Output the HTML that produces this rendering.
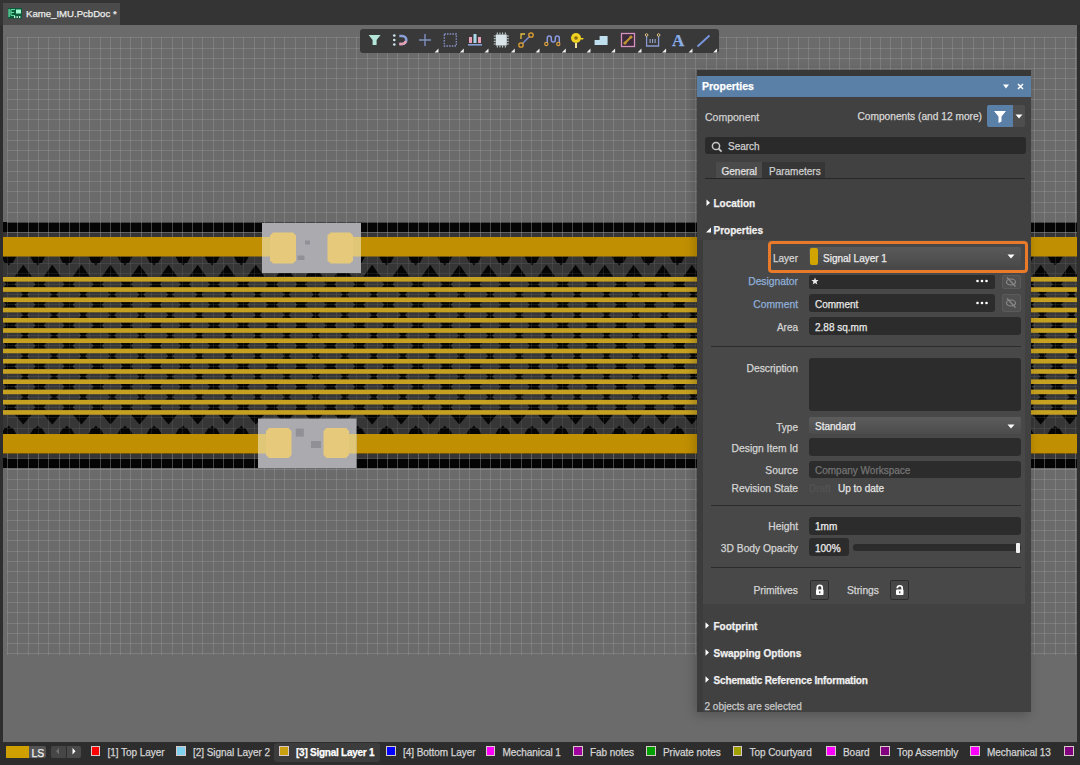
<!DOCTYPE html><html><head><meta charset="utf-8"><style>
*{margin:0;padding:0;box-sizing:border-box}
html,body{width:1080px;height:765px;overflow:hidden;background:#2e2e2e;font-family:"Liberation Sans",sans-serif}
.a{position:absolute}
.t{position:absolute;white-space:nowrap;line-height:1;-webkit-text-stroke:0.25px currentColor}
</style></head><body>
<div class="a" style="left:0;top:0;width:1080px;height:25px;background:#353434"></div>
<div class="a" style="left:3px;top:3px;width:117px;height:22px;background:#4b4b4b"></div>
<span class="t" style="left:26px;top:8.9px;font-size:9.6px;color:#ececec;font-weight:400;">Kame_IMU.PcbDoc *</span>
<svg class="a" style="left:7.5px;top:8px" width="15" height="11"><rect x="0" y="0" width="14" height="10.5" fill="#0b5a3a"/><rect x="0.5" y="1" width="1.2" height="8" fill="#70e8b0"/><path d="M3 1.5h4M3 4.5h3M3 7.5h4M3 1.5v6" stroke="#60d8a0" stroke-width="1.2"/><rect x="8" y="1.5" width="5" height="4" fill="#a0f8d0"/><rect x="6" y="8" width="1.3" height="2" fill="#c0f0d8"/><rect x="8.5" y="8" width="1.3" height="2" fill="#c0f0d8"/><rect x="11" y="8" width="1.3" height="2" fill="#c0f0d8"/></svg>
<div class="a" style="left:3px;top:25px;width:1074px;height:717px;background:#6b6b6b"></div>
<svg class="a" style="left:3px;top:222px" width="1074" height="246" viewBox="3 222 1074 246"><rect x="3" y="222" width="1074" height="246" fill="#050505"/><rect x="3" y="232" width="1074" height="5" fill="#353535"/><rect x="3" y="453.5" width="1074" height="4.5" fill="#353535"/><rect x="3" y="256" width="1074" height="178" fill="#363636"/><path fill="#050505" d="M-27.8 256.5H-12.8L-16.3 263H-18.3L-20.3 265.5L-22.3 263H-24.3ZM-43.4 276.5L-26.4 276.5L-34.9 264.7ZM-43.4 414.5L-26.4 414.5L-34.9 424.5ZM-27.8 434H-12.8L-16.3 428H-18.3L-20.3 425.5L-22.3 428H-24.3ZM1.2 256.5H16.2L12.7 263H10.7L8.7 265.5L6.7 263H4.7ZM-14.3 276.5L2.7 276.5L-5.8 264.7ZM-14.3 414.5L2.7 414.5L-5.8 424.5ZM1.2 434H16.2L12.7 428H10.7L8.7 425.5L6.7 428H4.7ZM30.3 256.5H45.3L41.8 263H39.8L37.8 265.5L35.8 263H33.8ZM14.8 276.5L31.8 276.5L23.3 264.7ZM14.8 414.5L31.8 414.5L23.3 424.5ZM30.3 434H45.3L41.8 428H39.8L37.8 425.5L35.8 428H33.8ZM59.4 256.5H74.4L70.9 263H68.9L66.9 265.5L64.9 263H62.9ZM43.8 276.5L60.8 276.5L52.3 264.7ZM43.8 414.5L60.8 414.5L52.3 424.5ZM59.4 434H74.4L70.9 428H68.9L66.9 425.5L64.9 428H62.9ZM88.4 256.5H103.4L99.9 263H97.9L95.9 265.5L93.9 263H91.9ZM72.9 276.5L89.9 276.5L81.4 264.7ZM72.9 414.5L89.9 414.5L81.4 424.5ZM88.4 434H103.4L99.9 428H97.9L95.9 425.5L93.9 428H91.9ZM117.5 256.5H132.5L129.0 263H127.0L125.0 265.5L123.0 263H121.0ZM102.0 276.5L119.0 276.5L110.5 264.7ZM102.0 414.5L119.0 414.5L110.5 424.5ZM117.5 434H132.5L129.0 428H127.0L125.0 425.5L123.0 428H121.0ZM146.6 256.5H161.6L158.1 263H156.1L154.1 265.5L152.1 263H150.1ZM131.0 276.5L148.0 276.5L139.5 264.7ZM131.0 414.5L148.0 414.5L139.5 424.5ZM146.6 434H161.6L158.1 428H156.1L154.1 425.5L152.1 428H150.1ZM175.6 256.5H190.6L187.1 263H185.1L183.1 265.5L181.1 263H179.1ZM160.1 276.5L177.1 276.5L168.6 264.7ZM160.1 414.5L177.1 414.5L168.6 424.5ZM175.6 434H190.6L187.1 428H185.1L183.1 425.5L181.1 428H179.1ZM204.7 256.5H219.7L216.2 263H214.2L212.2 265.5L210.2 263H208.2ZM189.2 276.5L206.2 276.5L197.7 264.7ZM189.2 414.5L206.2 414.5L197.7 424.5ZM204.7 434H219.7L216.2 428H214.2L212.2 425.5L210.2 428H208.2ZM233.8 256.5H248.8L245.3 263H243.3L241.3 265.5L239.3 263H237.3ZM218.3 276.5L235.3 276.5L226.8 264.7ZM218.3 414.5L235.3 414.5L226.8 424.5ZM233.8 434H248.8L245.3 428H243.3L241.3 425.5L239.3 428H237.3ZM262.9 256.5H277.9L274.4 263H272.4L270.4 265.5L268.4 263H266.4ZM247.3 276.5L264.3 276.5L255.8 264.7ZM247.3 414.5L264.3 414.5L255.8 424.5ZM262.9 434H277.9L274.4 428H272.4L270.4 425.5L268.4 428H266.4ZM291.9 256.5H306.9L303.4 263H301.4L299.4 265.5L297.4 263H295.4ZM276.4 276.5L293.4 276.5L284.9 264.7ZM276.4 414.5L293.4 414.5L284.9 424.5ZM291.9 434H306.9L303.4 428H301.4L299.4 425.5L297.4 428H295.4ZM321.0 256.5H336.0L332.5 263H330.5L328.5 265.5L326.5 263H324.5ZM305.5 276.5L322.5 276.5L314.0 264.7ZM305.5 414.5L322.5 414.5L314.0 424.5ZM321.0 434H336.0L332.5 428H330.5L328.5 425.5L326.5 428H324.5ZM350.1 256.5H365.1L361.6 263H359.6L357.6 265.5L355.6 263H353.6ZM334.5 276.5L351.5 276.5L343.0 264.7ZM334.5 414.5L351.5 414.5L343.0 424.5ZM350.1 434H365.1L361.6 428H359.6L357.6 425.5L355.6 428H353.6ZM379.1 256.5H394.1L390.6 263H388.6L386.6 265.5L384.6 263H382.6ZM363.6 276.5L380.6 276.5L372.1 264.7ZM363.6 414.5L380.6 414.5L372.1 424.5ZM379.1 434H394.1L390.6 428H388.6L386.6 425.5L384.6 428H382.6ZM408.2 256.5H423.2L419.7 263H417.7L415.7 265.5L413.7 263H411.7ZM392.7 276.5L409.7 276.5L401.2 264.7ZM392.7 414.5L409.7 414.5L401.2 424.5ZM408.2 434H423.2L419.7 428H417.7L415.7 425.5L413.7 428H411.7ZM437.3 256.5H452.3L448.8 263H446.8L444.8 265.5L442.8 263H440.8ZM421.7 276.5L438.7 276.5L430.2 264.7ZM421.7 414.5L438.7 414.5L430.2 424.5ZM437.3 434H452.3L448.8 428H446.8L444.8 425.5L442.8 428H440.8ZM466.4 256.5H481.4L477.9 263H475.9L473.9 265.5L471.9 263H469.9ZM450.8 276.5L467.8 276.5L459.3 264.7ZM450.8 414.5L467.8 414.5L459.3 424.5ZM466.4 434H481.4L477.9 428H475.9L473.9 425.5L471.9 428H469.9ZM495.4 256.5H510.4L506.9 263H504.9L502.9 265.5L500.9 263H498.9ZM479.9 276.5L496.9 276.5L488.4 264.7ZM479.9 414.5L496.9 414.5L488.4 424.5ZM495.4 434H510.4L506.9 428H504.9L502.9 425.5L500.9 428H498.9ZM524.5 256.5H539.5L536.0 263H534.0L532.0 265.5L530.0 263H528.0ZM509.0 276.5L526.0 276.5L517.5 264.7ZM509.0 414.5L526.0 414.5L517.5 424.5ZM524.5 434H539.5L536.0 428H534.0L532.0 425.5L530.0 428H528.0ZM553.6 256.5H568.6L565.1 263H563.1L561.1 265.5L559.1 263H557.1ZM538.0 276.5L555.0 276.5L546.5 264.7ZM538.0 414.5L555.0 414.5L546.5 424.5ZM553.6 434H568.6L565.1 428H563.1L561.1 425.5L559.1 428H557.1ZM582.6 256.5H597.6L594.1 263H592.1L590.1 265.5L588.1 263H586.1ZM567.1 276.5L584.1 276.5L575.6 264.7ZM567.1 414.5L584.1 414.5L575.6 424.5ZM582.6 434H597.6L594.1 428H592.1L590.1 425.5L588.1 428H586.1ZM611.7 256.5H626.7L623.2 263H621.2L619.2 265.5L617.2 263H615.2ZM596.2 276.5L613.2 276.5L604.7 264.7ZM596.2 414.5L613.2 414.5L604.7 424.5ZM611.7 434H626.7L623.2 428H621.2L619.2 425.5L617.2 428H615.2ZM640.8 256.5H655.8L652.3 263H650.3L648.3 265.5L646.3 263H644.3ZM625.2 276.5L642.2 276.5L633.7 264.7ZM625.2 414.5L642.2 414.5L633.7 424.5ZM640.8 434H655.8L652.3 428H650.3L648.3 425.5L646.3 428H644.3ZM669.8 256.5H684.8L681.3 263H679.3L677.3 265.5L675.3 263H673.3ZM654.3 276.5L671.3 276.5L662.8 264.7ZM654.3 414.5L671.3 414.5L662.8 424.5ZM669.8 434H684.8L681.3 428H679.3L677.3 425.5L675.3 428H673.3ZM698.9 256.5H713.9L710.4 263H708.4L706.4 265.5L704.4 263H702.4ZM683.4 276.5L700.4 276.5L691.9 264.7ZM683.4 414.5L700.4 414.5L691.9 424.5ZM698.9 434H713.9L710.4 428H708.4L706.4 425.5L704.4 428H702.4ZM728.0 256.5H743.0L739.5 263H737.5L735.5 265.5L733.5 263H731.5ZM712.4 276.5L729.4 276.5L720.9 264.7ZM712.4 414.5L729.4 414.5L720.9 424.5ZM728.0 434H743.0L739.5 428H737.5L735.5 425.5L733.5 428H731.5ZM757.0 256.5H772.0L768.5 263H766.5L764.5 265.5L762.5 263H760.5ZM741.5 276.5L758.5 276.5L750.0 264.7ZM741.5 414.5L758.5 414.5L750.0 424.5ZM757.0 434H772.0L768.5 428H766.5L764.5 425.5L762.5 428H760.5ZM786.1 256.5H801.1L797.6 263H795.6L793.6 265.5L791.6 263H789.6ZM770.6 276.5L787.6 276.5L779.1 264.7ZM770.6 414.5L787.6 414.5L779.1 424.5ZM786.1 434H801.1L797.6 428H795.6L793.6 425.5L791.6 428H789.6ZM815.2 256.5H830.2L826.7 263H824.7L822.7 265.5L820.7 263H818.7ZM799.7 276.5L816.7 276.5L808.2 264.7ZM799.7 414.5L816.7 414.5L808.2 424.5ZM815.2 434H830.2L826.7 428H824.7L822.7 425.5L820.7 428H818.7ZM844.3 256.5H859.3L855.8 263H853.8L851.8 265.5L849.8 263H847.8ZM828.7 276.5L845.7 276.5L837.2 264.7ZM828.7 414.5L845.7 414.5L837.2 424.5ZM844.3 434H859.3L855.8 428H853.8L851.8 425.5L849.8 428H847.8ZM873.3 256.5H888.3L884.8 263H882.8L880.8 265.5L878.8 263H876.8ZM857.8 276.5L874.8 276.5L866.3 264.7ZM857.8 414.5L874.8 414.5L866.3 424.5ZM873.3 434H888.3L884.8 428H882.8L880.8 425.5L878.8 428H876.8ZM902.4 256.5H917.4L913.9 263H911.9L909.9 265.5L907.9 263H905.9ZM886.9 276.5L903.9 276.5L895.4 264.7ZM886.9 414.5L903.9 414.5L895.4 424.5ZM902.4 434H917.4L913.9 428H911.9L909.9 425.5L907.9 428H905.9ZM931.5 256.5H946.5L943.0 263H941.0L939.0 265.5L937.0 263H935.0ZM915.9 276.5L932.9 276.5L924.4 264.7ZM915.9 414.5L932.9 414.5L924.4 424.5ZM931.5 434H946.5L943.0 428H941.0L939.0 425.5L937.0 428H935.0ZM960.5 256.5H975.5L972.0 263H970.0L968.0 265.5L966.0 263H964.0ZM945.0 276.5L962.0 276.5L953.5 264.7ZM945.0 414.5L962.0 414.5L953.5 424.5ZM960.5 434H975.5L972.0 428H970.0L968.0 425.5L966.0 428H964.0ZM989.6 256.5H1004.6L1001.1 263H999.1L997.1 265.5L995.1 263H993.1ZM974.1 276.5L991.1 276.5L982.6 264.7ZM974.1 414.5L991.1 414.5L982.6 424.5ZM989.6 434H1004.6L1001.1 428H999.1L997.1 425.5L995.1 428H993.1ZM1018.7 256.5H1033.7L1030.2 263H1028.2L1026.2 265.5L1024.2 263H1022.2ZM1003.1 276.5L1020.1 276.5L1011.6 264.7ZM1003.1 414.5L1020.1 414.5L1011.6 424.5ZM1018.7 434H1033.7L1030.2 428H1028.2L1026.2 425.5L1024.2 428H1022.2ZM1047.8 256.5H1062.8L1059.2 263H1057.2L1055.2 265.5L1053.2 263H1051.2ZM1032.2 276.5L1049.2 276.5L1040.7 264.7ZM1032.2 414.5L1049.2 414.5L1040.7 424.5ZM1047.8 434H1062.8L1059.2 428H1057.2L1055.2 425.5L1053.2 428H1051.2ZM1076.8 256.5H1091.8L1088.3 263H1086.3L1084.3 265.5L1082.3 263H1080.3ZM1061.3 276.5L1078.3 276.5L1069.8 264.7ZM1061.3 414.5L1078.3 414.5L1069.8 424.5ZM1076.8 434H1091.8L1088.3 428H1086.3L1084.3 425.5L1082.3 428H1080.3ZM1105.9 256.5H1120.9L1117.4 263H1115.4L1113.4 265.5L1111.4 263H1109.4ZM1090.4 276.5L1107.4 276.5L1098.9 264.7ZM1090.4 414.5L1107.4 414.5L1098.9 424.5ZM1105.9 434H1120.9L1117.4 428H1115.4L1113.4 425.5L1111.4 428H1109.4ZM1135.0 256.5H1150.0L1146.5 263H1144.5L1142.5 265.5L1140.5 263H1138.5ZM1119.4 276.5L1136.4 276.5L1127.9 264.7ZM1119.4 414.5L1136.4 414.5L1127.9 424.5ZM1135.0 434H1150.0L1146.5 428H1144.5L1142.5 425.5L1140.5 428H1138.5ZM1164.0 256.5H1179.0L1175.5 263H1173.5L1171.5 265.5L1169.5 263H1167.5ZM1148.5 276.5L1165.5 276.5L1157.0 264.7ZM1148.5 414.5L1165.5 414.5L1157.0 424.5ZM1164.0 434H1179.0L1175.5 428H1173.5L1171.5 425.5L1169.5 428H1167.5Z"/><path fill="#050505" d="M4.0 281.5h13l-2.5 2.87l2.5 2.87h-13l2.5 -2.87ZM33.1 281.5h13l-2.5 2.87l2.5 2.87h-13l2.5 -2.87ZM62.1 281.5h13l-2.5 2.87l2.5 2.87h-13l2.5 -2.87ZM91.2 281.5h13l-2.5 2.87l2.5 2.87h-13l2.5 -2.87ZM120.3 281.5h13l-2.5 2.87l2.5 2.87h-13l2.5 -2.87ZM149.3 281.5h13l-2.5 2.87l2.5 2.87h-13l2.5 -2.87ZM178.4 281.5h13l-2.5 2.87l2.5 2.87h-13l2.5 -2.87ZM207.5 281.5h13l-2.5 2.87l2.5 2.87h-13l2.5 -2.87ZM236.6 281.5h13l-2.5 2.87l2.5 2.87h-13l2.5 -2.87ZM265.6 281.5h13l-2.5 2.87l2.5 2.87h-13l2.5 -2.87ZM294.7 281.5h13l-2.5 2.87l2.5 2.87h-13l2.5 -2.87ZM323.8 281.5h13l-2.5 2.87l2.5 2.87h-13l2.5 -2.87ZM352.8 281.5h13l-2.5 2.87l2.5 2.87h-13l2.5 -2.87ZM381.9 281.5h13l-2.5 2.87l2.5 2.87h-13l2.5 -2.87ZM411.0 281.5h13l-2.5 2.87l2.5 2.87h-13l2.5 -2.87ZM440.1 281.5h13l-2.5 2.87l2.5 2.87h-13l2.5 -2.87ZM469.1 281.5h13l-2.5 2.87l2.5 2.87h-13l2.5 -2.87ZM498.2 281.5h13l-2.5 2.87l2.5 2.87h-13l2.5 -2.87ZM527.3 281.5h13l-2.5 2.87l2.5 2.87h-13l2.5 -2.87ZM556.3 281.5h13l-2.5 2.87l2.5 2.87h-13l2.5 -2.87ZM585.4 281.5h13l-2.5 2.87l2.5 2.87h-13l2.5 -2.87ZM614.5 281.5h13l-2.5 2.87l2.5 2.87h-13l2.5 -2.87ZM643.5 281.5h13l-2.5 2.87l2.5 2.87h-13l2.5 -2.87ZM672.6 281.5h13l-2.5 2.87l2.5 2.87h-13l2.5 -2.87ZM701.7 281.5h13l-2.5 2.87l2.5 2.87h-13l2.5 -2.87ZM730.8 281.5h13l-2.5 2.87l2.5 2.87h-13l2.5 -2.87ZM759.8 281.5h13l-2.5 2.87l2.5 2.87h-13l2.5 -2.87ZM788.9 281.5h13l-2.5 2.87l2.5 2.87h-13l2.5 -2.87ZM818.0 281.5h13l-2.5 2.87l2.5 2.87h-13l2.5 -2.87ZM847.0 281.5h13l-2.5 2.87l2.5 2.87h-13l2.5 -2.87ZM876.1 281.5h13l-2.5 2.87l2.5 2.87h-13l2.5 -2.87ZM905.2 281.5h13l-2.5 2.87l2.5 2.87h-13l2.5 -2.87ZM934.2 281.5h13l-2.5 2.87l2.5 2.87h-13l2.5 -2.87ZM963.3 281.5h13l-2.5 2.87l2.5 2.87h-13l2.5 -2.87ZM992.4 281.5h13l-2.5 2.87l2.5 2.87h-13l2.5 -2.87ZM1021.5 281.5h13l-2.5 2.87l2.5 2.87h-13l2.5 -2.87ZM1050.5 281.5h13l-2.5 2.87l2.5 2.87h-13l2.5 -2.87ZM1079.6 281.5h13l-2.5 2.87l2.5 2.87h-13l2.5 -2.87ZM-8.6 291.7h9l-2.5 2.87l2.5 2.87h-9l2.5 -2.87ZM20.5 291.7h9l-2.5 2.87l2.5 2.87h-9l2.5 -2.87ZM49.6 291.7h9l-2.5 2.87l2.5 2.87h-9l2.5 -2.87ZM78.6 291.7h9l-2.5 2.87l2.5 2.87h-9l2.5 -2.87ZM107.7 291.7h9l-2.5 2.87l2.5 2.87h-9l2.5 -2.87ZM136.8 291.7h9l-2.5 2.87l2.5 2.87h-9l2.5 -2.87ZM165.8 291.7h9l-2.5 2.87l2.5 2.87h-9l2.5 -2.87ZM194.9 291.7h9l-2.5 2.87l2.5 2.87h-9l2.5 -2.87ZM224.0 291.7h9l-2.5 2.87l2.5 2.87h-9l2.5 -2.87ZM253.1 291.7h9l-2.5 2.87l2.5 2.87h-9l2.5 -2.87ZM282.1 291.7h9l-2.5 2.87l2.5 2.87h-9l2.5 -2.87ZM311.2 291.7h9l-2.5 2.87l2.5 2.87h-9l2.5 -2.87ZM340.3 291.7h9l-2.5 2.87l2.5 2.87h-9l2.5 -2.87ZM369.3 291.7h9l-2.5 2.87l2.5 2.87h-9l2.5 -2.87ZM398.4 291.7h9l-2.5 2.87l2.5 2.87h-9l2.5 -2.87ZM427.5 291.7h9l-2.5 2.87l2.5 2.87h-9l2.5 -2.87ZM456.6 291.7h9l-2.5 2.87l2.5 2.87h-9l2.5 -2.87ZM485.6 291.7h9l-2.5 2.87l2.5 2.87h-9l2.5 -2.87ZM514.7 291.7h9l-2.5 2.87l2.5 2.87h-9l2.5 -2.87ZM543.8 291.7h9l-2.5 2.87l2.5 2.87h-9l2.5 -2.87ZM572.8 291.7h9l-2.5 2.87l2.5 2.87h-9l2.5 -2.87ZM601.9 291.7h9l-2.5 2.87l2.5 2.87h-9l2.5 -2.87ZM631.0 291.7h9l-2.5 2.87l2.5 2.87h-9l2.5 -2.87ZM660.0 291.7h9l-2.5 2.87l2.5 2.87h-9l2.5 -2.87ZM689.1 291.7h9l-2.5 2.87l2.5 2.87h-9l2.5 -2.87ZM718.2 291.7h9l-2.5 2.87l2.5 2.87h-9l2.5 -2.87ZM747.2 291.7h9l-2.5 2.87l2.5 2.87h-9l2.5 -2.87ZM776.3 291.7h9l-2.5 2.87l2.5 2.87h-9l2.5 -2.87ZM805.4 291.7h9l-2.5 2.87l2.5 2.87h-9l2.5 -2.87ZM834.5 291.7h9l-2.5 2.87l2.5 2.87h-9l2.5 -2.87ZM863.5 291.7h9l-2.5 2.87l2.5 2.87h-9l2.5 -2.87ZM892.6 291.7h9l-2.5 2.87l2.5 2.87h-9l2.5 -2.87ZM921.7 291.7h9l-2.5 2.87l2.5 2.87h-9l2.5 -2.87ZM950.7 291.7h9l-2.5 2.87l2.5 2.87h-9l2.5 -2.87ZM979.8 291.7h9l-2.5 2.87l2.5 2.87h-9l2.5 -2.87ZM1008.9 291.7h9l-2.5 2.87l2.5 2.87h-9l2.5 -2.87ZM1038.0 291.7h9l-2.5 2.87l2.5 2.87h-9l2.5 -2.87ZM1067.0 291.7h9l-2.5 2.87l2.5 2.87h-9l2.5 -2.87ZM4.0 302.0h13l-2.5 2.87l2.5 2.87h-13l2.5 -2.87ZM33.1 302.0h13l-2.5 2.87l2.5 2.87h-13l2.5 -2.87ZM62.1 302.0h13l-2.5 2.87l2.5 2.87h-13l2.5 -2.87ZM91.2 302.0h13l-2.5 2.87l2.5 2.87h-13l2.5 -2.87ZM120.3 302.0h13l-2.5 2.87l2.5 2.87h-13l2.5 -2.87ZM149.3 302.0h13l-2.5 2.87l2.5 2.87h-13l2.5 -2.87ZM178.4 302.0h13l-2.5 2.87l2.5 2.87h-13l2.5 -2.87ZM207.5 302.0h13l-2.5 2.87l2.5 2.87h-13l2.5 -2.87ZM236.6 302.0h13l-2.5 2.87l2.5 2.87h-13l2.5 -2.87ZM265.6 302.0h13l-2.5 2.87l2.5 2.87h-13l2.5 -2.87ZM294.7 302.0h13l-2.5 2.87l2.5 2.87h-13l2.5 -2.87ZM323.8 302.0h13l-2.5 2.87l2.5 2.87h-13l2.5 -2.87ZM352.8 302.0h13l-2.5 2.87l2.5 2.87h-13l2.5 -2.87ZM381.9 302.0h13l-2.5 2.87l2.5 2.87h-13l2.5 -2.87ZM411.0 302.0h13l-2.5 2.87l2.5 2.87h-13l2.5 -2.87ZM440.1 302.0h13l-2.5 2.87l2.5 2.87h-13l2.5 -2.87ZM469.1 302.0h13l-2.5 2.87l2.5 2.87h-13l2.5 -2.87ZM498.2 302.0h13l-2.5 2.87l2.5 2.87h-13l2.5 -2.87ZM527.3 302.0h13l-2.5 2.87l2.5 2.87h-13l2.5 -2.87ZM556.3 302.0h13l-2.5 2.87l2.5 2.87h-13l2.5 -2.87ZM585.4 302.0h13l-2.5 2.87l2.5 2.87h-13l2.5 -2.87ZM614.5 302.0h13l-2.5 2.87l2.5 2.87h-13l2.5 -2.87ZM643.5 302.0h13l-2.5 2.87l2.5 2.87h-13l2.5 -2.87ZM672.6 302.0h13l-2.5 2.87l2.5 2.87h-13l2.5 -2.87ZM701.7 302.0h13l-2.5 2.87l2.5 2.87h-13l2.5 -2.87ZM730.8 302.0h13l-2.5 2.87l2.5 2.87h-13l2.5 -2.87ZM759.8 302.0h13l-2.5 2.87l2.5 2.87h-13l2.5 -2.87ZM788.9 302.0h13l-2.5 2.87l2.5 2.87h-13l2.5 -2.87ZM818.0 302.0h13l-2.5 2.87l2.5 2.87h-13l2.5 -2.87ZM847.0 302.0h13l-2.5 2.87l2.5 2.87h-13l2.5 -2.87ZM876.1 302.0h13l-2.5 2.87l2.5 2.87h-13l2.5 -2.87ZM905.2 302.0h13l-2.5 2.87l2.5 2.87h-13l2.5 -2.87ZM934.2 302.0h13l-2.5 2.87l2.5 2.87h-13l2.5 -2.87ZM963.3 302.0h13l-2.5 2.87l2.5 2.87h-13l2.5 -2.87ZM992.4 302.0h13l-2.5 2.87l2.5 2.87h-13l2.5 -2.87ZM1021.5 302.0h13l-2.5 2.87l2.5 2.87h-13l2.5 -2.87ZM1050.5 302.0h13l-2.5 2.87l2.5 2.87h-13l2.5 -2.87ZM1079.6 302.0h13l-2.5 2.87l2.5 2.87h-13l2.5 -2.87ZM-8.6 312.2h9l-2.5 2.87l2.5 2.87h-9l2.5 -2.87ZM20.5 312.2h9l-2.5 2.87l2.5 2.87h-9l2.5 -2.87ZM49.6 312.2h9l-2.5 2.87l2.5 2.87h-9l2.5 -2.87ZM78.6 312.2h9l-2.5 2.87l2.5 2.87h-9l2.5 -2.87ZM107.7 312.2h9l-2.5 2.87l2.5 2.87h-9l2.5 -2.87ZM136.8 312.2h9l-2.5 2.87l2.5 2.87h-9l2.5 -2.87ZM165.8 312.2h9l-2.5 2.87l2.5 2.87h-9l2.5 -2.87ZM194.9 312.2h9l-2.5 2.87l2.5 2.87h-9l2.5 -2.87ZM224.0 312.2h9l-2.5 2.87l2.5 2.87h-9l2.5 -2.87ZM253.1 312.2h9l-2.5 2.87l2.5 2.87h-9l2.5 -2.87ZM282.1 312.2h9l-2.5 2.87l2.5 2.87h-9l2.5 -2.87ZM311.2 312.2h9l-2.5 2.87l2.5 2.87h-9l2.5 -2.87ZM340.3 312.2h9l-2.5 2.87l2.5 2.87h-9l2.5 -2.87ZM369.3 312.2h9l-2.5 2.87l2.5 2.87h-9l2.5 -2.87ZM398.4 312.2h9l-2.5 2.87l2.5 2.87h-9l2.5 -2.87ZM427.5 312.2h9l-2.5 2.87l2.5 2.87h-9l2.5 -2.87ZM456.6 312.2h9l-2.5 2.87l2.5 2.87h-9l2.5 -2.87ZM485.6 312.2h9l-2.5 2.87l2.5 2.87h-9l2.5 -2.87ZM514.7 312.2h9l-2.5 2.87l2.5 2.87h-9l2.5 -2.87ZM543.8 312.2h9l-2.5 2.87l2.5 2.87h-9l2.5 -2.87ZM572.8 312.2h9l-2.5 2.87l2.5 2.87h-9l2.5 -2.87ZM601.9 312.2h9l-2.5 2.87l2.5 2.87h-9l2.5 -2.87ZM631.0 312.2h9l-2.5 2.87l2.5 2.87h-9l2.5 -2.87ZM660.0 312.2h9l-2.5 2.87l2.5 2.87h-9l2.5 -2.87ZM689.1 312.2h9l-2.5 2.87l2.5 2.87h-9l2.5 -2.87ZM718.2 312.2h9l-2.5 2.87l2.5 2.87h-9l2.5 -2.87ZM747.2 312.2h9l-2.5 2.87l2.5 2.87h-9l2.5 -2.87ZM776.3 312.2h9l-2.5 2.87l2.5 2.87h-9l2.5 -2.87ZM805.4 312.2h9l-2.5 2.87l2.5 2.87h-9l2.5 -2.87ZM834.5 312.2h9l-2.5 2.87l2.5 2.87h-9l2.5 -2.87ZM863.5 312.2h9l-2.5 2.87l2.5 2.87h-9l2.5 -2.87ZM892.6 312.2h9l-2.5 2.87l2.5 2.87h-9l2.5 -2.87ZM921.7 312.2h9l-2.5 2.87l2.5 2.87h-9l2.5 -2.87ZM950.7 312.2h9l-2.5 2.87l2.5 2.87h-9l2.5 -2.87ZM979.8 312.2h9l-2.5 2.87l2.5 2.87h-9l2.5 -2.87ZM1008.9 312.2h9l-2.5 2.87l2.5 2.87h-9l2.5 -2.87ZM1038.0 312.2h9l-2.5 2.87l2.5 2.87h-9l2.5 -2.87ZM1067.0 312.2h9l-2.5 2.87l2.5 2.87h-9l2.5 -2.87ZM4.0 322.5h13l-2.5 2.87l2.5 2.87h-13l2.5 -2.87ZM33.1 322.5h13l-2.5 2.87l2.5 2.87h-13l2.5 -2.87ZM62.1 322.5h13l-2.5 2.87l2.5 2.87h-13l2.5 -2.87ZM91.2 322.5h13l-2.5 2.87l2.5 2.87h-13l2.5 -2.87ZM120.3 322.5h13l-2.5 2.87l2.5 2.87h-13l2.5 -2.87ZM149.3 322.5h13l-2.5 2.87l2.5 2.87h-13l2.5 -2.87ZM178.4 322.5h13l-2.5 2.87l2.5 2.87h-13l2.5 -2.87ZM207.5 322.5h13l-2.5 2.87l2.5 2.87h-13l2.5 -2.87ZM236.6 322.5h13l-2.5 2.87l2.5 2.87h-13l2.5 -2.87ZM265.6 322.5h13l-2.5 2.87l2.5 2.87h-13l2.5 -2.87ZM294.7 322.5h13l-2.5 2.87l2.5 2.87h-13l2.5 -2.87ZM323.8 322.5h13l-2.5 2.87l2.5 2.87h-13l2.5 -2.87ZM352.8 322.5h13l-2.5 2.87l2.5 2.87h-13l2.5 -2.87ZM381.9 322.5h13l-2.5 2.87l2.5 2.87h-13l2.5 -2.87ZM411.0 322.5h13l-2.5 2.87l2.5 2.87h-13l2.5 -2.87ZM440.1 322.5h13l-2.5 2.87l2.5 2.87h-13l2.5 -2.87ZM469.1 322.5h13l-2.5 2.87l2.5 2.87h-13l2.5 -2.87ZM498.2 322.5h13l-2.5 2.87l2.5 2.87h-13l2.5 -2.87ZM527.3 322.5h13l-2.5 2.87l2.5 2.87h-13l2.5 -2.87ZM556.3 322.5h13l-2.5 2.87l2.5 2.87h-13l2.5 -2.87ZM585.4 322.5h13l-2.5 2.87l2.5 2.87h-13l2.5 -2.87ZM614.5 322.5h13l-2.5 2.87l2.5 2.87h-13l2.5 -2.87ZM643.5 322.5h13l-2.5 2.87l2.5 2.87h-13l2.5 -2.87ZM672.6 322.5h13l-2.5 2.87l2.5 2.87h-13l2.5 -2.87ZM701.7 322.5h13l-2.5 2.87l2.5 2.87h-13l2.5 -2.87ZM730.8 322.5h13l-2.5 2.87l2.5 2.87h-13l2.5 -2.87ZM759.8 322.5h13l-2.5 2.87l2.5 2.87h-13l2.5 -2.87ZM788.9 322.5h13l-2.5 2.87l2.5 2.87h-13l2.5 -2.87ZM818.0 322.5h13l-2.5 2.87l2.5 2.87h-13l2.5 -2.87ZM847.0 322.5h13l-2.5 2.87l2.5 2.87h-13l2.5 -2.87ZM876.1 322.5h13l-2.5 2.87l2.5 2.87h-13l2.5 -2.87ZM905.2 322.5h13l-2.5 2.87l2.5 2.87h-13l2.5 -2.87ZM934.2 322.5h13l-2.5 2.87l2.5 2.87h-13l2.5 -2.87ZM963.3 322.5h13l-2.5 2.87l2.5 2.87h-13l2.5 -2.87ZM992.4 322.5h13l-2.5 2.87l2.5 2.87h-13l2.5 -2.87ZM1021.5 322.5h13l-2.5 2.87l2.5 2.87h-13l2.5 -2.87ZM1050.5 322.5h13l-2.5 2.87l2.5 2.87h-13l2.5 -2.87ZM1079.6 322.5h13l-2.5 2.87l2.5 2.87h-13l2.5 -2.87ZM-8.6 332.7h9l-2.5 2.87l2.5 2.87h-9l2.5 -2.87ZM20.5 332.7h9l-2.5 2.87l2.5 2.87h-9l2.5 -2.87ZM49.6 332.7h9l-2.5 2.87l2.5 2.87h-9l2.5 -2.87ZM78.6 332.7h9l-2.5 2.87l2.5 2.87h-9l2.5 -2.87ZM107.7 332.7h9l-2.5 2.87l2.5 2.87h-9l2.5 -2.87ZM136.8 332.7h9l-2.5 2.87l2.5 2.87h-9l2.5 -2.87ZM165.8 332.7h9l-2.5 2.87l2.5 2.87h-9l2.5 -2.87ZM194.9 332.7h9l-2.5 2.87l2.5 2.87h-9l2.5 -2.87ZM224.0 332.7h9l-2.5 2.87l2.5 2.87h-9l2.5 -2.87ZM253.1 332.7h9l-2.5 2.87l2.5 2.87h-9l2.5 -2.87ZM282.1 332.7h9l-2.5 2.87l2.5 2.87h-9l2.5 -2.87ZM311.2 332.7h9l-2.5 2.87l2.5 2.87h-9l2.5 -2.87ZM340.3 332.7h9l-2.5 2.87l2.5 2.87h-9l2.5 -2.87ZM369.3 332.7h9l-2.5 2.87l2.5 2.87h-9l2.5 -2.87ZM398.4 332.7h9l-2.5 2.87l2.5 2.87h-9l2.5 -2.87ZM427.5 332.7h9l-2.5 2.87l2.5 2.87h-9l2.5 -2.87ZM456.6 332.7h9l-2.5 2.87l2.5 2.87h-9l2.5 -2.87ZM485.6 332.7h9l-2.5 2.87l2.5 2.87h-9l2.5 -2.87ZM514.7 332.7h9l-2.5 2.87l2.5 2.87h-9l2.5 -2.87ZM543.8 332.7h9l-2.5 2.87l2.5 2.87h-9l2.5 -2.87ZM572.8 332.7h9l-2.5 2.87l2.5 2.87h-9l2.5 -2.87ZM601.9 332.7h9l-2.5 2.87l2.5 2.87h-9l2.5 -2.87ZM631.0 332.7h9l-2.5 2.87l2.5 2.87h-9l2.5 -2.87ZM660.0 332.7h9l-2.5 2.87l2.5 2.87h-9l2.5 -2.87ZM689.1 332.7h9l-2.5 2.87l2.5 2.87h-9l2.5 -2.87ZM718.2 332.7h9l-2.5 2.87l2.5 2.87h-9l2.5 -2.87ZM747.2 332.7h9l-2.5 2.87l2.5 2.87h-9l2.5 -2.87ZM776.3 332.7h9l-2.5 2.87l2.5 2.87h-9l2.5 -2.87ZM805.4 332.7h9l-2.5 2.87l2.5 2.87h-9l2.5 -2.87ZM834.5 332.7h9l-2.5 2.87l2.5 2.87h-9l2.5 -2.87ZM863.5 332.7h9l-2.5 2.87l2.5 2.87h-9l2.5 -2.87ZM892.6 332.7h9l-2.5 2.87l2.5 2.87h-9l2.5 -2.87ZM921.7 332.7h9l-2.5 2.87l2.5 2.87h-9l2.5 -2.87ZM950.7 332.7h9l-2.5 2.87l2.5 2.87h-9l2.5 -2.87ZM979.8 332.7h9l-2.5 2.87l2.5 2.87h-9l2.5 -2.87ZM1008.9 332.7h9l-2.5 2.87l2.5 2.87h-9l2.5 -2.87ZM1038.0 332.7h9l-2.5 2.87l2.5 2.87h-9l2.5 -2.87ZM1067.0 332.7h9l-2.5 2.87l2.5 2.87h-9l2.5 -2.87ZM4.0 342.9h13l-2.5 2.87l2.5 2.87h-13l2.5 -2.87ZM33.1 342.9h13l-2.5 2.87l2.5 2.87h-13l2.5 -2.87ZM62.1 342.9h13l-2.5 2.87l2.5 2.87h-13l2.5 -2.87ZM91.2 342.9h13l-2.5 2.87l2.5 2.87h-13l2.5 -2.87ZM120.3 342.9h13l-2.5 2.87l2.5 2.87h-13l2.5 -2.87ZM149.3 342.9h13l-2.5 2.87l2.5 2.87h-13l2.5 -2.87ZM178.4 342.9h13l-2.5 2.87l2.5 2.87h-13l2.5 -2.87ZM207.5 342.9h13l-2.5 2.87l2.5 2.87h-13l2.5 -2.87ZM236.6 342.9h13l-2.5 2.87l2.5 2.87h-13l2.5 -2.87ZM265.6 342.9h13l-2.5 2.87l2.5 2.87h-13l2.5 -2.87ZM294.7 342.9h13l-2.5 2.87l2.5 2.87h-13l2.5 -2.87ZM323.8 342.9h13l-2.5 2.87l2.5 2.87h-13l2.5 -2.87ZM352.8 342.9h13l-2.5 2.87l2.5 2.87h-13l2.5 -2.87ZM381.9 342.9h13l-2.5 2.87l2.5 2.87h-13l2.5 -2.87ZM411.0 342.9h13l-2.5 2.87l2.5 2.87h-13l2.5 -2.87ZM440.1 342.9h13l-2.5 2.87l2.5 2.87h-13l2.5 -2.87ZM469.1 342.9h13l-2.5 2.87l2.5 2.87h-13l2.5 -2.87ZM498.2 342.9h13l-2.5 2.87l2.5 2.87h-13l2.5 -2.87ZM527.3 342.9h13l-2.5 2.87l2.5 2.87h-13l2.5 -2.87ZM556.3 342.9h13l-2.5 2.87l2.5 2.87h-13l2.5 -2.87ZM585.4 342.9h13l-2.5 2.87l2.5 2.87h-13l2.5 -2.87ZM614.5 342.9h13l-2.5 2.87l2.5 2.87h-13l2.5 -2.87ZM643.5 342.9h13l-2.5 2.87l2.5 2.87h-13l2.5 -2.87ZM672.6 342.9h13l-2.5 2.87l2.5 2.87h-13l2.5 -2.87ZM701.7 342.9h13l-2.5 2.87l2.5 2.87h-13l2.5 -2.87ZM730.8 342.9h13l-2.5 2.87l2.5 2.87h-13l2.5 -2.87ZM759.8 342.9h13l-2.5 2.87l2.5 2.87h-13l2.5 -2.87ZM788.9 342.9h13l-2.5 2.87l2.5 2.87h-13l2.5 -2.87ZM818.0 342.9h13l-2.5 2.87l2.5 2.87h-13l2.5 -2.87ZM847.0 342.9h13l-2.5 2.87l2.5 2.87h-13l2.5 -2.87ZM876.1 342.9h13l-2.5 2.87l2.5 2.87h-13l2.5 -2.87ZM905.2 342.9h13l-2.5 2.87l2.5 2.87h-13l2.5 -2.87ZM934.2 342.9h13l-2.5 2.87l2.5 2.87h-13l2.5 -2.87ZM963.3 342.9h13l-2.5 2.87l2.5 2.87h-13l2.5 -2.87ZM992.4 342.9h13l-2.5 2.87l2.5 2.87h-13l2.5 -2.87ZM1021.5 342.9h13l-2.5 2.87l2.5 2.87h-13l2.5 -2.87ZM1050.5 342.9h13l-2.5 2.87l2.5 2.87h-13l2.5 -2.87ZM1079.6 342.9h13l-2.5 2.87l2.5 2.87h-13l2.5 -2.87ZM-8.6 353.2h9l-2.5 2.87l2.5 2.87h-9l2.5 -2.87ZM20.5 353.2h9l-2.5 2.87l2.5 2.87h-9l2.5 -2.87ZM49.6 353.2h9l-2.5 2.87l2.5 2.87h-9l2.5 -2.87ZM78.6 353.2h9l-2.5 2.87l2.5 2.87h-9l2.5 -2.87ZM107.7 353.2h9l-2.5 2.87l2.5 2.87h-9l2.5 -2.87ZM136.8 353.2h9l-2.5 2.87l2.5 2.87h-9l2.5 -2.87ZM165.8 353.2h9l-2.5 2.87l2.5 2.87h-9l2.5 -2.87ZM194.9 353.2h9l-2.5 2.87l2.5 2.87h-9l2.5 -2.87ZM224.0 353.2h9l-2.5 2.87l2.5 2.87h-9l2.5 -2.87ZM253.1 353.2h9l-2.5 2.87l2.5 2.87h-9l2.5 -2.87ZM282.1 353.2h9l-2.5 2.87l2.5 2.87h-9l2.5 -2.87ZM311.2 353.2h9l-2.5 2.87l2.5 2.87h-9l2.5 -2.87ZM340.3 353.2h9l-2.5 2.87l2.5 2.87h-9l2.5 -2.87ZM369.3 353.2h9l-2.5 2.87l2.5 2.87h-9l2.5 -2.87ZM398.4 353.2h9l-2.5 2.87l2.5 2.87h-9l2.5 -2.87ZM427.5 353.2h9l-2.5 2.87l2.5 2.87h-9l2.5 -2.87ZM456.6 353.2h9l-2.5 2.87l2.5 2.87h-9l2.5 -2.87ZM485.6 353.2h9l-2.5 2.87l2.5 2.87h-9l2.5 -2.87ZM514.7 353.2h9l-2.5 2.87l2.5 2.87h-9l2.5 -2.87ZM543.8 353.2h9l-2.5 2.87l2.5 2.87h-9l2.5 -2.87ZM572.8 353.2h9l-2.5 2.87l2.5 2.87h-9l2.5 -2.87ZM601.9 353.2h9l-2.5 2.87l2.5 2.87h-9l2.5 -2.87ZM631.0 353.2h9l-2.5 2.87l2.5 2.87h-9l2.5 -2.87ZM660.0 353.2h9l-2.5 2.87l2.5 2.87h-9l2.5 -2.87ZM689.1 353.2h9l-2.5 2.87l2.5 2.87h-9l2.5 -2.87ZM718.2 353.2h9l-2.5 2.87l2.5 2.87h-9l2.5 -2.87ZM747.2 353.2h9l-2.5 2.87l2.5 2.87h-9l2.5 -2.87ZM776.3 353.2h9l-2.5 2.87l2.5 2.87h-9l2.5 -2.87ZM805.4 353.2h9l-2.5 2.87l2.5 2.87h-9l2.5 -2.87ZM834.5 353.2h9l-2.5 2.87l2.5 2.87h-9l2.5 -2.87ZM863.5 353.2h9l-2.5 2.87l2.5 2.87h-9l2.5 -2.87ZM892.6 353.2h9l-2.5 2.87l2.5 2.87h-9l2.5 -2.87ZM921.7 353.2h9l-2.5 2.87l2.5 2.87h-9l2.5 -2.87ZM950.7 353.2h9l-2.5 2.87l2.5 2.87h-9l2.5 -2.87ZM979.8 353.2h9l-2.5 2.87l2.5 2.87h-9l2.5 -2.87ZM1008.9 353.2h9l-2.5 2.87l2.5 2.87h-9l2.5 -2.87ZM1038.0 353.2h9l-2.5 2.87l2.5 2.87h-9l2.5 -2.87ZM1067.0 353.2h9l-2.5 2.87l2.5 2.87h-9l2.5 -2.87ZM4.0 363.4h13l-2.5 2.87l2.5 2.87h-13l2.5 -2.87ZM33.1 363.4h13l-2.5 2.87l2.5 2.87h-13l2.5 -2.87ZM62.1 363.4h13l-2.5 2.87l2.5 2.87h-13l2.5 -2.87ZM91.2 363.4h13l-2.5 2.87l2.5 2.87h-13l2.5 -2.87ZM120.3 363.4h13l-2.5 2.87l2.5 2.87h-13l2.5 -2.87ZM149.3 363.4h13l-2.5 2.87l2.5 2.87h-13l2.5 -2.87ZM178.4 363.4h13l-2.5 2.87l2.5 2.87h-13l2.5 -2.87ZM207.5 363.4h13l-2.5 2.87l2.5 2.87h-13l2.5 -2.87ZM236.6 363.4h13l-2.5 2.87l2.5 2.87h-13l2.5 -2.87ZM265.6 363.4h13l-2.5 2.87l2.5 2.87h-13l2.5 -2.87ZM294.7 363.4h13l-2.5 2.87l2.5 2.87h-13l2.5 -2.87ZM323.8 363.4h13l-2.5 2.87l2.5 2.87h-13l2.5 -2.87ZM352.8 363.4h13l-2.5 2.87l2.5 2.87h-13l2.5 -2.87ZM381.9 363.4h13l-2.5 2.87l2.5 2.87h-13l2.5 -2.87ZM411.0 363.4h13l-2.5 2.87l2.5 2.87h-13l2.5 -2.87ZM440.1 363.4h13l-2.5 2.87l2.5 2.87h-13l2.5 -2.87ZM469.1 363.4h13l-2.5 2.87l2.5 2.87h-13l2.5 -2.87ZM498.2 363.4h13l-2.5 2.87l2.5 2.87h-13l2.5 -2.87ZM527.3 363.4h13l-2.5 2.87l2.5 2.87h-13l2.5 -2.87ZM556.3 363.4h13l-2.5 2.87l2.5 2.87h-13l2.5 -2.87ZM585.4 363.4h13l-2.5 2.87l2.5 2.87h-13l2.5 -2.87ZM614.5 363.4h13l-2.5 2.87l2.5 2.87h-13l2.5 -2.87ZM643.5 363.4h13l-2.5 2.87l2.5 2.87h-13l2.5 -2.87ZM672.6 363.4h13l-2.5 2.87l2.5 2.87h-13l2.5 -2.87ZM701.7 363.4h13l-2.5 2.87l2.5 2.87h-13l2.5 -2.87ZM730.8 363.4h13l-2.5 2.87l2.5 2.87h-13l2.5 -2.87ZM759.8 363.4h13l-2.5 2.87l2.5 2.87h-13l2.5 -2.87ZM788.9 363.4h13l-2.5 2.87l2.5 2.87h-13l2.5 -2.87ZM818.0 363.4h13l-2.5 2.87l2.5 2.87h-13l2.5 -2.87ZM847.0 363.4h13l-2.5 2.87l2.5 2.87h-13l2.5 -2.87ZM876.1 363.4h13l-2.5 2.87l2.5 2.87h-13l2.5 -2.87ZM905.2 363.4h13l-2.5 2.87l2.5 2.87h-13l2.5 -2.87ZM934.2 363.4h13l-2.5 2.87l2.5 2.87h-13l2.5 -2.87ZM963.3 363.4h13l-2.5 2.87l2.5 2.87h-13l2.5 -2.87ZM992.4 363.4h13l-2.5 2.87l2.5 2.87h-13l2.5 -2.87ZM1021.5 363.4h13l-2.5 2.87l2.5 2.87h-13l2.5 -2.87ZM1050.5 363.4h13l-2.5 2.87l2.5 2.87h-13l2.5 -2.87ZM1079.6 363.4h13l-2.5 2.87l2.5 2.87h-13l2.5 -2.87ZM-8.6 373.7h9l-2.5 2.87l2.5 2.87h-9l2.5 -2.87ZM20.5 373.7h9l-2.5 2.87l2.5 2.87h-9l2.5 -2.87ZM49.6 373.7h9l-2.5 2.87l2.5 2.87h-9l2.5 -2.87ZM78.6 373.7h9l-2.5 2.87l2.5 2.87h-9l2.5 -2.87ZM107.7 373.7h9l-2.5 2.87l2.5 2.87h-9l2.5 -2.87ZM136.8 373.7h9l-2.5 2.87l2.5 2.87h-9l2.5 -2.87ZM165.8 373.7h9l-2.5 2.87l2.5 2.87h-9l2.5 -2.87ZM194.9 373.7h9l-2.5 2.87l2.5 2.87h-9l2.5 -2.87ZM224.0 373.7h9l-2.5 2.87l2.5 2.87h-9l2.5 -2.87ZM253.1 373.7h9l-2.5 2.87l2.5 2.87h-9l2.5 -2.87ZM282.1 373.7h9l-2.5 2.87l2.5 2.87h-9l2.5 -2.87ZM311.2 373.7h9l-2.5 2.87l2.5 2.87h-9l2.5 -2.87ZM340.3 373.7h9l-2.5 2.87l2.5 2.87h-9l2.5 -2.87ZM369.3 373.7h9l-2.5 2.87l2.5 2.87h-9l2.5 -2.87ZM398.4 373.7h9l-2.5 2.87l2.5 2.87h-9l2.5 -2.87ZM427.5 373.7h9l-2.5 2.87l2.5 2.87h-9l2.5 -2.87ZM456.6 373.7h9l-2.5 2.87l2.5 2.87h-9l2.5 -2.87ZM485.6 373.7h9l-2.5 2.87l2.5 2.87h-9l2.5 -2.87ZM514.7 373.7h9l-2.5 2.87l2.5 2.87h-9l2.5 -2.87ZM543.8 373.7h9l-2.5 2.87l2.5 2.87h-9l2.5 -2.87ZM572.8 373.7h9l-2.5 2.87l2.5 2.87h-9l2.5 -2.87ZM601.9 373.7h9l-2.5 2.87l2.5 2.87h-9l2.5 -2.87ZM631.0 373.7h9l-2.5 2.87l2.5 2.87h-9l2.5 -2.87ZM660.0 373.7h9l-2.5 2.87l2.5 2.87h-9l2.5 -2.87ZM689.1 373.7h9l-2.5 2.87l2.5 2.87h-9l2.5 -2.87ZM718.2 373.7h9l-2.5 2.87l2.5 2.87h-9l2.5 -2.87ZM747.2 373.7h9l-2.5 2.87l2.5 2.87h-9l2.5 -2.87ZM776.3 373.7h9l-2.5 2.87l2.5 2.87h-9l2.5 -2.87ZM805.4 373.7h9l-2.5 2.87l2.5 2.87h-9l2.5 -2.87ZM834.5 373.7h9l-2.5 2.87l2.5 2.87h-9l2.5 -2.87ZM863.5 373.7h9l-2.5 2.87l2.5 2.87h-9l2.5 -2.87ZM892.6 373.7h9l-2.5 2.87l2.5 2.87h-9l2.5 -2.87ZM921.7 373.7h9l-2.5 2.87l2.5 2.87h-9l2.5 -2.87ZM950.7 373.7h9l-2.5 2.87l2.5 2.87h-9l2.5 -2.87ZM979.8 373.7h9l-2.5 2.87l2.5 2.87h-9l2.5 -2.87ZM1008.9 373.7h9l-2.5 2.87l2.5 2.87h-9l2.5 -2.87ZM1038.0 373.7h9l-2.5 2.87l2.5 2.87h-9l2.5 -2.87ZM1067.0 373.7h9l-2.5 2.87l2.5 2.87h-9l2.5 -2.87ZM4.0 383.9h13l-2.5 2.87l2.5 2.87h-13l2.5 -2.87ZM33.1 383.9h13l-2.5 2.87l2.5 2.87h-13l2.5 -2.87ZM62.1 383.9h13l-2.5 2.87l2.5 2.87h-13l2.5 -2.87ZM91.2 383.9h13l-2.5 2.87l2.5 2.87h-13l2.5 -2.87ZM120.3 383.9h13l-2.5 2.87l2.5 2.87h-13l2.5 -2.87ZM149.3 383.9h13l-2.5 2.87l2.5 2.87h-13l2.5 -2.87ZM178.4 383.9h13l-2.5 2.87l2.5 2.87h-13l2.5 -2.87ZM207.5 383.9h13l-2.5 2.87l2.5 2.87h-13l2.5 -2.87ZM236.6 383.9h13l-2.5 2.87l2.5 2.87h-13l2.5 -2.87ZM265.6 383.9h13l-2.5 2.87l2.5 2.87h-13l2.5 -2.87ZM294.7 383.9h13l-2.5 2.87l2.5 2.87h-13l2.5 -2.87ZM323.8 383.9h13l-2.5 2.87l2.5 2.87h-13l2.5 -2.87ZM352.8 383.9h13l-2.5 2.87l2.5 2.87h-13l2.5 -2.87ZM381.9 383.9h13l-2.5 2.87l2.5 2.87h-13l2.5 -2.87ZM411.0 383.9h13l-2.5 2.87l2.5 2.87h-13l2.5 -2.87ZM440.1 383.9h13l-2.5 2.87l2.5 2.87h-13l2.5 -2.87ZM469.1 383.9h13l-2.5 2.87l2.5 2.87h-13l2.5 -2.87ZM498.2 383.9h13l-2.5 2.87l2.5 2.87h-13l2.5 -2.87ZM527.3 383.9h13l-2.5 2.87l2.5 2.87h-13l2.5 -2.87ZM556.3 383.9h13l-2.5 2.87l2.5 2.87h-13l2.5 -2.87ZM585.4 383.9h13l-2.5 2.87l2.5 2.87h-13l2.5 -2.87ZM614.5 383.9h13l-2.5 2.87l2.5 2.87h-13l2.5 -2.87ZM643.5 383.9h13l-2.5 2.87l2.5 2.87h-13l2.5 -2.87ZM672.6 383.9h13l-2.5 2.87l2.5 2.87h-13l2.5 -2.87ZM701.7 383.9h13l-2.5 2.87l2.5 2.87h-13l2.5 -2.87ZM730.8 383.9h13l-2.5 2.87l2.5 2.87h-13l2.5 -2.87ZM759.8 383.9h13l-2.5 2.87l2.5 2.87h-13l2.5 -2.87ZM788.9 383.9h13l-2.5 2.87l2.5 2.87h-13l2.5 -2.87ZM818.0 383.9h13l-2.5 2.87l2.5 2.87h-13l2.5 -2.87ZM847.0 383.9h13l-2.5 2.87l2.5 2.87h-13l2.5 -2.87ZM876.1 383.9h13l-2.5 2.87l2.5 2.87h-13l2.5 -2.87ZM905.2 383.9h13l-2.5 2.87l2.5 2.87h-13l2.5 -2.87ZM934.2 383.9h13l-2.5 2.87l2.5 2.87h-13l2.5 -2.87ZM963.3 383.9h13l-2.5 2.87l2.5 2.87h-13l2.5 -2.87ZM992.4 383.9h13l-2.5 2.87l2.5 2.87h-13l2.5 -2.87ZM1021.5 383.9h13l-2.5 2.87l2.5 2.87h-13l2.5 -2.87ZM1050.5 383.9h13l-2.5 2.87l2.5 2.87h-13l2.5 -2.87ZM1079.6 383.9h13l-2.5 2.87l2.5 2.87h-13l2.5 -2.87ZM-8.6 394.1h9l-2.5 2.87l2.5 2.87h-9l2.5 -2.87ZM20.5 394.1h9l-2.5 2.87l2.5 2.87h-9l2.5 -2.87ZM49.6 394.1h9l-2.5 2.87l2.5 2.87h-9l2.5 -2.87ZM78.6 394.1h9l-2.5 2.87l2.5 2.87h-9l2.5 -2.87ZM107.7 394.1h9l-2.5 2.87l2.5 2.87h-9l2.5 -2.87ZM136.8 394.1h9l-2.5 2.87l2.5 2.87h-9l2.5 -2.87ZM165.8 394.1h9l-2.5 2.87l2.5 2.87h-9l2.5 -2.87ZM194.9 394.1h9l-2.5 2.87l2.5 2.87h-9l2.5 -2.87ZM224.0 394.1h9l-2.5 2.87l2.5 2.87h-9l2.5 -2.87ZM253.1 394.1h9l-2.5 2.87l2.5 2.87h-9l2.5 -2.87ZM282.1 394.1h9l-2.5 2.87l2.5 2.87h-9l2.5 -2.87ZM311.2 394.1h9l-2.5 2.87l2.5 2.87h-9l2.5 -2.87ZM340.3 394.1h9l-2.5 2.87l2.5 2.87h-9l2.5 -2.87ZM369.3 394.1h9l-2.5 2.87l2.5 2.87h-9l2.5 -2.87ZM398.4 394.1h9l-2.5 2.87l2.5 2.87h-9l2.5 -2.87ZM427.5 394.1h9l-2.5 2.87l2.5 2.87h-9l2.5 -2.87ZM456.6 394.1h9l-2.5 2.87l2.5 2.87h-9l2.5 -2.87ZM485.6 394.1h9l-2.5 2.87l2.5 2.87h-9l2.5 -2.87ZM514.7 394.1h9l-2.5 2.87l2.5 2.87h-9l2.5 -2.87ZM543.8 394.1h9l-2.5 2.87l2.5 2.87h-9l2.5 -2.87ZM572.8 394.1h9l-2.5 2.87l2.5 2.87h-9l2.5 -2.87ZM601.9 394.1h9l-2.5 2.87l2.5 2.87h-9l2.5 -2.87ZM631.0 394.1h9l-2.5 2.87l2.5 2.87h-9l2.5 -2.87ZM660.0 394.1h9l-2.5 2.87l2.5 2.87h-9l2.5 -2.87ZM689.1 394.1h9l-2.5 2.87l2.5 2.87h-9l2.5 -2.87ZM718.2 394.1h9l-2.5 2.87l2.5 2.87h-9l2.5 -2.87ZM747.2 394.1h9l-2.5 2.87l2.5 2.87h-9l2.5 -2.87ZM776.3 394.1h9l-2.5 2.87l2.5 2.87h-9l2.5 -2.87ZM805.4 394.1h9l-2.5 2.87l2.5 2.87h-9l2.5 -2.87ZM834.5 394.1h9l-2.5 2.87l2.5 2.87h-9l2.5 -2.87ZM863.5 394.1h9l-2.5 2.87l2.5 2.87h-9l2.5 -2.87ZM892.6 394.1h9l-2.5 2.87l2.5 2.87h-9l2.5 -2.87ZM921.7 394.1h9l-2.5 2.87l2.5 2.87h-9l2.5 -2.87ZM950.7 394.1h9l-2.5 2.87l2.5 2.87h-9l2.5 -2.87ZM979.8 394.1h9l-2.5 2.87l2.5 2.87h-9l2.5 -2.87ZM1008.9 394.1h9l-2.5 2.87l2.5 2.87h-9l2.5 -2.87ZM1038.0 394.1h9l-2.5 2.87l2.5 2.87h-9l2.5 -2.87ZM1067.0 394.1h9l-2.5 2.87l2.5 2.87h-9l2.5 -2.87ZM4.0 404.4h13l-2.5 2.87l2.5 2.87h-13l2.5 -2.87ZM33.1 404.4h13l-2.5 2.87l2.5 2.87h-13l2.5 -2.87ZM62.1 404.4h13l-2.5 2.87l2.5 2.87h-13l2.5 -2.87ZM91.2 404.4h13l-2.5 2.87l2.5 2.87h-13l2.5 -2.87ZM120.3 404.4h13l-2.5 2.87l2.5 2.87h-13l2.5 -2.87ZM149.3 404.4h13l-2.5 2.87l2.5 2.87h-13l2.5 -2.87ZM178.4 404.4h13l-2.5 2.87l2.5 2.87h-13l2.5 -2.87ZM207.5 404.4h13l-2.5 2.87l2.5 2.87h-13l2.5 -2.87ZM236.6 404.4h13l-2.5 2.87l2.5 2.87h-13l2.5 -2.87ZM265.6 404.4h13l-2.5 2.87l2.5 2.87h-13l2.5 -2.87ZM294.7 404.4h13l-2.5 2.87l2.5 2.87h-13l2.5 -2.87ZM323.8 404.4h13l-2.5 2.87l2.5 2.87h-13l2.5 -2.87ZM352.8 404.4h13l-2.5 2.87l2.5 2.87h-13l2.5 -2.87ZM381.9 404.4h13l-2.5 2.87l2.5 2.87h-13l2.5 -2.87ZM411.0 404.4h13l-2.5 2.87l2.5 2.87h-13l2.5 -2.87ZM440.1 404.4h13l-2.5 2.87l2.5 2.87h-13l2.5 -2.87ZM469.1 404.4h13l-2.5 2.87l2.5 2.87h-13l2.5 -2.87ZM498.2 404.4h13l-2.5 2.87l2.5 2.87h-13l2.5 -2.87ZM527.3 404.4h13l-2.5 2.87l2.5 2.87h-13l2.5 -2.87ZM556.3 404.4h13l-2.5 2.87l2.5 2.87h-13l2.5 -2.87ZM585.4 404.4h13l-2.5 2.87l2.5 2.87h-13l2.5 -2.87ZM614.5 404.4h13l-2.5 2.87l2.5 2.87h-13l2.5 -2.87ZM643.5 404.4h13l-2.5 2.87l2.5 2.87h-13l2.5 -2.87ZM672.6 404.4h13l-2.5 2.87l2.5 2.87h-13l2.5 -2.87ZM701.7 404.4h13l-2.5 2.87l2.5 2.87h-13l2.5 -2.87ZM730.8 404.4h13l-2.5 2.87l2.5 2.87h-13l2.5 -2.87ZM759.8 404.4h13l-2.5 2.87l2.5 2.87h-13l2.5 -2.87ZM788.9 404.4h13l-2.5 2.87l2.5 2.87h-13l2.5 -2.87ZM818.0 404.4h13l-2.5 2.87l2.5 2.87h-13l2.5 -2.87ZM847.0 404.4h13l-2.5 2.87l2.5 2.87h-13l2.5 -2.87ZM876.1 404.4h13l-2.5 2.87l2.5 2.87h-13l2.5 -2.87ZM905.2 404.4h13l-2.5 2.87l2.5 2.87h-13l2.5 -2.87ZM934.2 404.4h13l-2.5 2.87l2.5 2.87h-13l2.5 -2.87ZM963.3 404.4h13l-2.5 2.87l2.5 2.87h-13l2.5 -2.87ZM992.4 404.4h13l-2.5 2.87l2.5 2.87h-13l2.5 -2.87ZM1021.5 404.4h13l-2.5 2.87l2.5 2.87h-13l2.5 -2.87ZM1050.5 404.4h13l-2.5 2.87l2.5 2.87h-13l2.5 -2.87ZM1079.6 404.4h13l-2.5 2.87l2.5 2.87h-13l2.5 -2.87Z"/></svg>
<svg class="a" style="left:0;top:0" width="1080" height="765"><path d="M7.5 37V222M7.5 468V655M17.5 37V222M17.5 468V655M28.5 37V222M28.5 468V655M38.5 37V222M38.5 468V655M48.5 37V222M48.5 468V655M59.5 37V222M59.5 468V655M69.5 37V222M69.5 468V655M79.5 37V222M79.5 468V655M89.5 37V222M89.5 468V655M100.5 37V222M100.5 468V655M110.5 37V222M110.5 468V655M120.5 37V222M120.5 468V655M130.5 37V222M130.5 468V655M141.5 37V222M141.5 468V655M151.5 37V222M151.5 468V655M161.5 37V222M161.5 468V655M172.5 37V222M172.5 468V655M182.5 37V222M182.5 468V655M192.5 37V222M192.5 468V655M202.5 37V222M202.5 468V655M213.5 37V222M213.5 468V655M223.5 37V222M223.5 468V655M233.5 37V222M233.5 468V655M243.5 37V222M243.5 468V655M254.5 37V222M254.5 468V655M264.5 37V222M264.5 468V655M274.5 37V222M274.5 468V655M284.5 37V222M284.5 468V655M295.5 37V222M295.5 468V655M305.5 37V222M305.5 468V655M315.5 37V222M315.5 468V655M326.5 37V222M326.5 468V655M336.5 37V222M336.5 468V655M346.5 37V222M346.5 468V655M356.5 37V222M356.5 468V655M367.5 37V222M367.5 468V655M377.5 37V222M377.5 468V655M387.5 37V222M387.5 468V655M397.5 37V222M397.5 468V655M408.5 37V222M408.5 468V655M418.5 37V222M418.5 468V655M428.5 37V222M428.5 468V655M439.5 37V222M439.5 468V655M449.5 37V222M449.5 468V655M459.5 37V222M459.5 468V655M469.5 37V222M469.5 468V655M480.5 37V222M480.5 468V655M490.5 37V222M490.5 468V655M500.5 37V222M500.5 468V655M510.5 37V222M510.5 468V655M521.5 37V222M521.5 468V655M531.5 37V222M531.5 468V655M541.5 37V222M541.5 468V655M552.5 37V222M552.5 468V655M562.5 37V222M562.5 468V655M572.5 37V222M572.5 468V655M582.5 37V222M582.5 468V655M593.5 37V222M593.5 468V655M603.5 37V222M603.5 468V655M613.5 37V222M613.5 468V655M623.5 37V222M623.5 468V655M634.5 37V222M634.5 468V655M644.5 37V222M644.5 468V655M654.5 37V222M654.5 468V655M664.5 37V222M664.5 468V655M675.5 37V222M675.5 468V655M685.5 37V222M685.5 468V655M695.5 37V222M695.5 468V655M706.5 37V222M706.5 468V655M716.5 37V222M716.5 468V655M726.5 37V222M726.5 468V655M736.5 37V222M736.5 468V655M747.5 37V222M747.5 468V655M757.5 37V222M757.5 468V655M767.5 37V222M767.5 468V655M777.5 37V222M777.5 468V655M788.5 37V222M788.5 468V655M798.5 37V222M798.5 468V655M808.5 37V222M808.5 468V655M819.5 37V222M819.5 468V655M829.5 37V222M829.5 468V655M839.5 37V222M839.5 468V655M849.5 37V222M849.5 468V655M860.5 37V222M860.5 468V655M870.5 37V222M870.5 468V655M880.5 37V222M880.5 468V655M890.5 37V222M890.5 468V655M901.5 37V222M901.5 468V655M911.5 37V222M911.5 468V655M921.5 37V222M921.5 468V655M931.5 37V222M931.5 468V655M942.5 37V222M942.5 468V655M952.5 37V222M952.5 468V655M962.5 37V222M962.5 468V655M973.5 37V222M973.5 468V655M983.5 37V222M983.5 468V655M993.5 37V222M993.5 468V655M1003.5 37V222M1003.5 468V655M1014.5 37V222M1014.5 468V655M1024.5 37V222M1024.5 468V655M1034.5 37V222M1034.5 468V655M1044.5 37V222M1044.5 468V655M1055.5 37V222M1055.5 468V655M1065.5 37V222M1065.5 468V655M1075.5 37V222M1075.5 468V655M7 37.5H1077M7 48.5H1077M7 58.5H1077M7 68.5H1077M7 78.5H1077M7 89.5H1077M7 99.5H1077M7 109.5H1077M7 119.5H1077M7 130.5H1077M7 140.5H1077M7 150.5H1077M7 160.5H1077M7 171.5H1077M7 181.5H1077M7 191.5H1077M7 202.5H1077M7 212.5H1077M7 469.5H1077M7 479.5H1077M7 489.5H1077M7 499.5H1077M7 510.5H1077M7 520.5H1077M7 530.5H1077M7 540.5H1077M7 551.5H1077M7 561.5H1077M7 571.5H1077M7 582.5H1077M7 592.5H1077M7 602.5H1077M7 612.5H1077M7 623.5H1077M7 633.5H1077M7 643.5H1077M7 653.5H1077" stroke="rgba(170,170,170,0.30)" stroke-width="1" fill="none"/><path d="M7.5 237V453M17.5 237V453M28.5 237V453M38.5 237V453M48.5 237V453M59.5 237V453M69.5 237V453M79.5 237V453M89.5 237V453M100.5 237V453M110.5 237V453M120.5 237V453M130.5 237V453M141.5 237V453M151.5 237V453M161.5 237V453M172.5 237V453M182.5 237V453M192.5 237V453M202.5 237V453M213.5 237V453M223.5 237V453M233.5 237V453M243.5 237V453M254.5 237V453M264.5 237V453M274.5 237V453M284.5 237V453M295.5 237V453M305.5 237V453M315.5 237V453M326.5 237V453M336.5 237V453M346.5 237V453M356.5 237V453M367.5 237V453M377.5 237V453M387.5 237V453M397.5 237V453M408.5 237V453M418.5 237V453M428.5 237V453M439.5 237V453M449.5 237V453M459.5 237V453M469.5 237V453M480.5 237V453M490.5 237V453M500.5 237V453M510.5 237V453M521.5 237V453M531.5 237V453M541.5 237V453M552.5 237V453M562.5 237V453M572.5 237V453M582.5 237V453M593.5 237V453M603.5 237V453M613.5 237V453M623.5 237V453M634.5 237V453M644.5 237V453M654.5 237V453M664.5 237V453M675.5 237V453M685.5 237V453M695.5 237V453M706.5 237V453M716.5 237V453M726.5 237V453M736.5 237V453M747.5 237V453M757.5 237V453M767.5 237V453M777.5 237V453M788.5 237V453M798.5 237V453M808.5 237V453M819.5 237V453M829.5 237V453M839.5 237V453M849.5 237V453M860.5 237V453M870.5 237V453M880.5 237V453M890.5 237V453M901.5 237V453M911.5 237V453M921.5 237V453M931.5 237V453M942.5 237V453M952.5 237V453M962.5 237V453M973.5 237V453M983.5 237V453M993.5 237V453M1003.5 237V453M1014.5 237V453M1024.5 237V453M1034.5 237V453M1044.5 237V453M1055.5 237V453M1065.5 237V453M1075.5 237V453M7 243.5H1077M7 253.5H1077M7 263.5H1077M7 273.5H1077M7 284.5H1077M7 294.5H1077M7 304.5H1077M7 315.5H1077M7 325.5H1077M7 335.5H1077M7 345.5H1077M7 356.5H1077M7 366.5H1077M7 376.5H1077M7 386.5H1077M7 397.5H1077M7 407.5H1077M7 417.5H1077M7 428.5H1077M7 438.5H1077M7 448.5H1077" stroke="rgba(170,170,170,0.12)" stroke-width="1" fill="none"/><path d="M7.5 222V237M7.5 453V468M17.5 222V237M17.5 453V468M28.5 222V237M28.5 453V468M38.5 222V237M38.5 453V468M48.5 222V237M48.5 453V468M59.5 222V237M59.5 453V468M69.5 222V237M69.5 453V468M79.5 222V237M79.5 453V468M89.5 222V237M89.5 453V468M100.5 222V237M100.5 453V468M110.5 222V237M110.5 453V468M120.5 222V237M120.5 453V468M130.5 222V237M130.5 453V468M141.5 222V237M141.5 453V468M151.5 222V237M151.5 453V468M161.5 222V237M161.5 453V468M172.5 222V237M172.5 453V468M182.5 222V237M182.5 453V468M192.5 222V237M192.5 453V468M202.5 222V237M202.5 453V468M213.5 222V237M213.5 453V468M223.5 222V237M223.5 453V468M233.5 222V237M233.5 453V468M243.5 222V237M243.5 453V468M254.5 222V237M254.5 453V468M264.5 222V237M264.5 453V468M274.5 222V237M274.5 453V468M284.5 222V237M284.5 453V468M295.5 222V237M295.5 453V468M305.5 222V237M305.5 453V468M315.5 222V237M315.5 453V468M326.5 222V237M326.5 453V468M336.5 222V237M336.5 453V468M346.5 222V237M346.5 453V468M356.5 222V237M356.5 453V468M367.5 222V237M367.5 453V468M377.5 222V237M377.5 453V468M387.5 222V237M387.5 453V468M397.5 222V237M397.5 453V468M408.5 222V237M408.5 453V468M418.5 222V237M418.5 453V468M428.5 222V237M428.5 453V468M439.5 222V237M439.5 453V468M449.5 222V237M449.5 453V468M459.5 222V237M459.5 453V468M469.5 222V237M469.5 453V468M480.5 222V237M480.5 453V468M490.5 222V237M490.5 453V468M500.5 222V237M500.5 453V468M510.5 222V237M510.5 453V468M521.5 222V237M521.5 453V468M531.5 222V237M531.5 453V468M541.5 222V237M541.5 453V468M552.5 222V237M552.5 453V468M562.5 222V237M562.5 453V468M572.5 222V237M572.5 453V468M582.5 222V237M582.5 453V468M593.5 222V237M593.5 453V468M603.5 222V237M603.5 453V468M613.5 222V237M613.5 453V468M623.5 222V237M623.5 453V468M634.5 222V237M634.5 453V468M644.5 222V237M644.5 453V468M654.5 222V237M654.5 453V468M664.5 222V237M664.5 453V468M675.5 222V237M675.5 453V468M685.5 222V237M685.5 453V468M695.5 222V237M695.5 453V468M706.5 222V237M706.5 453V468M716.5 222V237M716.5 453V468M726.5 222V237M726.5 453V468M736.5 222V237M736.5 453V468M747.5 222V237M747.5 453V468M757.5 222V237M757.5 453V468M767.5 222V237M767.5 453V468M777.5 222V237M777.5 453V468M788.5 222V237M788.5 453V468M798.5 222V237M798.5 453V468M808.5 222V237M808.5 453V468M819.5 222V237M819.5 453V468M829.5 222V237M829.5 453V468M839.5 222V237M839.5 453V468M849.5 222V237M849.5 453V468M860.5 222V237M860.5 453V468M870.5 222V237M870.5 453V468M880.5 222V237M880.5 453V468M890.5 222V237M890.5 453V468M901.5 222V237M901.5 453V468M911.5 222V237M911.5 453V468M921.5 222V237M921.5 453V468M931.5 222V237M931.5 453V468M942.5 222V237M942.5 453V468M952.5 222V237M952.5 453V468M962.5 222V237M962.5 453V468M973.5 222V237M973.5 453V468M983.5 222V237M983.5 453V468M993.5 222V237M993.5 453V468M1003.5 222V237M1003.5 453V468M1014.5 222V237M1014.5 453V468M1024.5 222V237M1024.5 453V468M1034.5 222V237M1034.5 453V468M1044.5 222V237M1044.5 453V468M1055.5 222V237M1055.5 453V468M1065.5 222V237M1065.5 453V468M1075.5 222V237M1075.5 453V468M7 222.5H1077M7 232.5H1077M7 458.5H1077" stroke="rgba(170,170,170,0.38)" stroke-width="1" fill="none"/></svg>
<svg class="a" style="left:3px;top:222px" width="1074" height="246" viewBox="3 222 1074 246"><rect x="3" y="237" width="1074" height="19.5" fill="#c08f02"/><rect x="3" y="434" width="1074" height="19.5" fill="#c08f02"/><rect x="3" y="277.00" width="1074" height="4.6" fill="#c6a020"/><rect x="3" y="287.24" width="1074" height="4.6" fill="#c6a020"/><rect x="3" y="297.48" width="1074" height="4.6" fill="#c6a020"/><rect x="3" y="307.72" width="1074" height="4.6" fill="#c6a020"/><rect x="3" y="317.96" width="1074" height="4.6" fill="#c6a020"/><rect x="3" y="328.20" width="1074" height="4.6" fill="#c6a020"/><rect x="3" y="338.44" width="1074" height="4.6" fill="#c6a020"/><rect x="3" y="348.68" width="1074" height="4.6" fill="#c6a020"/><rect x="3" y="358.92" width="1074" height="4.6" fill="#c6a020"/><rect x="3" y="369.16" width="1074" height="4.6" fill="#c6a020"/><rect x="3" y="379.40" width="1074" height="4.6" fill="#c6a020"/><rect x="3" y="389.64" width="1074" height="4.6" fill="#c6a020"/><rect x="3" y="399.88" width="1074" height="4.6" fill="#c6a020"/><rect x="3" y="410.12" width="1074" height="4.6" fill="#c6a020"/><rect x="262" y="223" width="99" height="50" fill="#aaaaaf"/><rect x="297.5" y="255.5" width="7" height="4.5" fill="#909096"/><rect x="305" y="240.5" width="5" height="4" fill="#909096"/><rect x="262" y="237" width="11" height="19.5" fill="#e0c778"/><rect x="350" y="237" width="11" height="19.5" fill="#e0c778"/><path d="M273 232.5H293L296 235.5V260.5L293 263.5H273L270 260.5V235.5Z" fill="#e6c97a"/><path d="M330.5 232.5H350L353 235.5V260.5L350 263.5H330.5L327.5 260.5V235.5Z" fill="#e6c97a"/><rect x="258" y="418.5" width="98.5" height="49.5" fill="#aaaaaf"/><rect x="295.8" y="428.6" width="8" height="8" fill="#909096"/><rect x="311" y="441" width="10" height="7" fill="#909096"/><rect x="258" y="434" width="11" height="19.5" fill="#e0c778"/><rect x="346" y="434" width="10.5" height="19.5" fill="#e0c778"/><path d="M269 428H288.5L291.5 431V455L288.5 458H269L266 455V431Z" fill="#e6c97a"/><path d="M326.5 428H346L349 431V455L346 458H326.5L323.5 455V431Z" fill="#e6c97a"/></svg>
<div class="a" style="left:697px;top:70px;width:333.5px;height:642px;background:#414141;box-shadow:-2px 3px 10px rgba(0,0,0,0.22)"></div><div class="a" style="left:697px;top:240px;width:6px;height:472px;background:#3c3c3c;"></div><div class="a" style="left:697px;top:70px;width:333.5px;height:6px;background:#383838;"></div><div class="a" style="left:697px;top:76px;width:333.5px;height:20.799999999999997px;background:#5b80a8;"></div><span class="t" style="left:702px;top:81.1px;font-size:10.5px;color:#ffffff;font-weight:700;">Properties</span><svg class="a" style="left:1000px;top:80px" width="30" height="14"><path d="M3 4.5h6l-3 4z" fill="#fff"/><path d="M18 4l5 5M23 4l-5 5" stroke="#fff" stroke-width="1.5"/></svg><span class="t" style="left:705px;top:111.6px;font-size:10.5px;color:#d0d0d0;font-weight:400;">Component</span><span class="t" style="right:98px;top:112.4px;font-size:10.2px;color:#d8d8d8;font-weight:400;">Components (and 12 more)</span><div class="a" style="left:987px;top:105px;width:26px;height:22px;background:#5b80a8;border-radius:2px 0 0 2px"></div><div class="a" style="left:1013px;top:105px;width:12px;height:22px;background:#4e4e4e;border-radius:0 2px 2px 0"></div><svg class="a" style="left:987px;top:105px" width="38" height="22"><path d="M7 6h12l-4.5 5.5v5l-3 1.5v-6.5z" fill="#fff"/><path d="M28.5 9.5h7l-3.5 4z" fill="#fff"/></svg><div class="a" style="left:705px;top:137px;width:321px;height:17px;background:#2a2a2a;border-radius:3px"></div><svg class="a" style="left:710px;top:140px" width="14" height="14"><circle cx="6" cy="6" r="3.6" stroke="#c8c8c8" stroke-width="1.5" fill="none"/><path d="M8.6 8.6l3 3" stroke="#c8c8c8" stroke-width="1.8"/></svg><span class="t" style="left:728px;top:142.0px;font-size:10px;color:#d0d0d0;font-weight:400;">Search</span><div class="a" style="left:716px;top:162px;width:46px;height:16px;background:#4b4b4b;"></div><div class="a" style="left:762px;top:162px;width:63px;height:16px;background:#363636;"></div><div class="a" style="left:705px;top:178px;width:320px;height:1px;background:#262626;"></div><span class="t" style="left:721.5px;top:166.5px;font-size:10px;color:#e0e0e0;font-weight:400;">General</span><span class="t" style="left:769px;top:166.5px;font-size:10px;color:#d0d0d0;font-weight:400;">Parameters</span><svg class="a" style="left:703px;top:196px" width="10" height="40"><path d="M3.5 3.5l3.5 3.3-3.5 3.3z" fill="#fff"/><path d="M3 36.5h5v-5z" fill="#fff"/></svg><span class="t" style="left:713.5px;top:199.0px;font-size:10px;color:#f0f0f0;font-weight:700;">Location</span><span class="t" style="left:713.5px;top:225.5px;font-size:10px;color:#f0f0f0;font-weight:700;">Properties</span><div class="a" style="left:703px;top:240px;width:322px;height:364px;background:#484848;"></div><div class="a" style="left:768px;top:240.5px;width:260px;height:32.5px;background:transparent;border:3px solid #e87a2a;border-radius:4px"></div><span class="t" style="right:282px;top:253.5px;font-size:10px;color:#d4d4d4;font-weight:400;">Layer</span><div class="a" style="left:809px;top:247px;width:212px;height:19px;background:linear-gradient(#5a5a5a,#4a4a4a);border-radius:2px"></div><div class="a" style="left:810px;top:248px;width:7.5px;height:17px;background:#d2a400;border-radius:2px"></div><span class="t" style="left:823px;top:253.5px;font-size:10px;color:#ececec;font-weight:400;">Signal Layer 1</span><svg class="a" style="left:1007px;top:254px" width="10" height="6"><path d="M0.5 0.5h7l-3.5 4z" fill="#fff"/></svg><span class="t" style="right:282px;top:276.8px;font-size:10.3px;color:#8fb0d8;font-weight:400;">Designator</span><div class="a" style="left:809px;top:274.5px;width:186px;height:14.0px;background:#2c2c2c;border-radius:2px"></div><svg class="a" style="left:811px;top:277px" width="8" height="8"><path d="M4 0.5l1 2.4 2.6 0.2-2 1.7 0.6 2.6-2.2-1.4-2.2 1.4 0.6-2.6-2-1.7 2.6-0.2z" fill="#e8e8e8"/></svg><span class="t" style="right:282px;top:299.8px;font-size:10.3px;color:#8fb0d8;font-weight:400;">Comment</span><div class="a" style="left:809px;top:294px;width:186px;height:18px;background:#2c2c2c;border-radius:3px"></div><span class="t" style="left:815px;top:300.0px;font-size:10px;color:#e8e8e8;font-weight:400;">Comment</span><svg class="a" style="left:974px;top:277.5px" width="16" height="6"><circle cx="3.5" cy="3" r="1.3" fill="#fff"/><circle cx="8" cy="3" r="1.3" fill="#fff"/><circle cx="12.5" cy="3" r="1.3" fill="#fff"/></svg><svg class="a" style="left:974px;top:300px" width="16" height="6"><circle cx="3.5" cy="3" r="1.3" fill="#fff"/><circle cx="8" cy="3" r="1.3" fill="#fff"/><circle cx="12.5" cy="3" r="1.3" fill="#fff"/></svg><div class="a" style="left:1002px;top:274.5px;width:18.5px;height:14.0px;background:#505050;border:1px solid #5a5a5a;border-radius:2px"></div><svg class="a" style="left:1004px;top:275.5px" width="14" height="12"><ellipse cx="7" cy="6" rx="4.5" ry="3" stroke="#8a8a8a" stroke-width="1.2" fill="none"/><path d="M3 1.5l8.5 9" stroke="#8a8a8a" stroke-width="1.3"/></svg><div class="a" style="left:1002px;top:294px;width:18.5px;height:18px;background:#505050;border:1px solid #5a5a5a;border-radius:2px"></div><svg class="a" style="left:1004px;top:297.0px" width="14" height="12"><ellipse cx="7" cy="6" rx="4.5" ry="3" stroke="#8a8a8a" stroke-width="1.2" fill="none"/><path d="M3 1.5l8.5 9" stroke="#8a8a8a" stroke-width="1.3"/></svg><span class="t" style="right:282px;top:323.0px;font-size:10px;color:#d4d4d4;font-weight:400;">Area</span><div class="a" style="left:809px;top:317px;width:212px;height:18px;background:#2c2c2c;border-radius:3px"></div><span class="t" style="left:815px;top:323.0px;font-size:10px;color:#e8e8e8;font-weight:400;">2.88 sq.mm</span><div class="a" style="left:711px;top:345.5px;width:310px;height:1.0px;background:#2c2c2c;"></div><span class="t" style="right:282px;top:364.3px;font-size:10.3px;color:#d4d4d4;font-weight:400;">Description</span><div class="a" style="left:809px;top:358px;width:212px;height:53px;background:#2c2c2c;border-radius:3px"></div><span class="t" style="right:282px;top:422.5px;font-size:10px;color:#d4d4d4;font-weight:400;">Type</span><div class="a" style="left:809px;top:417px;width:212px;height:17px;background:linear-gradient(#5c5c5c,#4c4c4c);border-radius:2px"></div><span class="t" style="left:815px;top:422.0px;font-size:10px;color:#ececec;font-weight:400;">Standard</span><svg class="a" style="left:1007px;top:424px" width="10" height="6"><path d="M0.5 0.5h7l-3.5 4z" fill="#fff"/></svg><span class="t" style="right:282px;top:444.3px;font-size:10.3px;color:#d4d4d4;font-weight:400;">Design Item Id</span><div class="a" style="left:809px;top:438px;width:212px;height:18px;background:#2c2c2c;border-radius:3px"></div><span class="t" style="right:282px;top:465.8px;font-size:10.3px;color:#d4d4d4;font-weight:400;">Source</span><div class="a" style="left:809px;top:460.5px;width:212px;height:17.0px;background:#2c2c2c;border-radius:3px"></div><span class="t" style="left:815px;top:465.5px;font-size:10px;color:#747474;font-weight:400;">Company Workspace</span><span class="t" style="right:282px;top:483.8px;font-size:10.3px;color:#d4d4d4;font-weight:400;">Revision State</span><span class="t" style="left:809px;top:484.0px;font-size:10px;color:#535353;font-weight:400;">Draft</span><span class="t" style="left:838px;top:484.0px;font-size:10px;color:#e4e4e4;font-weight:400;">Up to date</span><div class="a" style="left:711px;top:504.5px;width:310px;height:1.0px;background:#2c2c2c;"></div><span class="t" style="right:282px;top:521.8px;font-size:10.3px;color:#d4d4d4;font-weight:400;">Height</span><div class="a" style="left:809px;top:517px;width:212px;height:17.5px;background:#2c2c2c;border-radius:3px"></div><span class="t" style="left:815px;top:522.0px;font-size:10px;color:#ececec;font-weight:400;">1mm</span><span class="t" style="right:282px;top:543.8px;font-size:10.3px;color:#d4d4d4;font-weight:400;">3D Body Opacity</span><div class="a" style="left:809px;top:538px;width:40px;height:17.5px;background:#2c2c2c;border-radius:3px"></div><span class="t" style="left:815px;top:544.0px;font-size:10px;color:#ececec;font-weight:400;">100%</span><div class="a" style="left:853px;top:544px;width:168px;height:7px;background:#2c2c2c;border-radius:3px"></div><div class="a" style="left:1015.5px;top:542.5px;width:4.0px;height:10.0px;background:#f0f0f0;border-radius:1px"></div><div class="a" style="left:711px;top:566.5px;width:310px;height:1.0px;background:#2c2c2c;"></div><span class="t" style="right:282px;top:586.3px;font-size:10.3px;color:#d4d4d4;font-weight:400;">Primitives</span><span class="t" style="right:201px;top:586.3px;font-size:10.3px;color:#d4d4d4;font-weight:400;">Strings</span><div class="a" style="left:809.5px;top:579.5px;width:19.5px;height:20.0px;background:#474747;border:1px solid #2c2c2c;border-radius:2px"></div><div class="a" style="left:889.5px;top:579.5px;width:19.5px;height:20.0px;background:#474747;border:1px solid #2c2c2c;border-radius:2px"></div><svg class="a" style="left:809.5px;top:579.5px" width="20" height="20"><path d="M7.3 10v-2.3a2.45 2.45 0 0 1 4.9 0v2.3" stroke="#fff" stroke-width="1.7" fill="none"/><rect x="6" y="9.5" width="7.5" height="5.5" rx="1" fill="#fff"/><rect x="9.1" y="11.3" width="1.3" height="2" fill="#474747"/></svg><svg class="a" style="left:889.5px;top:579.5px" width="20" height="20"><path d="M7.3 8.2a2.45 2.45 0 0 1 4.9 0v2" stroke="#fff" stroke-width="1.7" fill="none"/><rect x="6" y="9.5" width="7.5" height="5.5" rx="1" fill="#fff"/><rect x="9.1" y="11.3" width="1.3" height="2" fill="#474747"/></svg><svg class="a" style="left:0;top:0" width="1080" height="765"><path d="M705.5 622.2l3.5 3.3-3.5 3.3zM705.5 649.2l3.5 3.3-3.5 3.3zM705.5 676.2l3.5 3.3-3.5 3.3z" fill="#fff"/></svg><span class="t" style="left:713.5px;top:621.5px;font-size:10px;color:#f0f0f0;font-weight:700;">Footprint</span><span class="t" style="left:713.5px;top:648.5px;font-size:10px;color:#f0f0f0;font-weight:700;">Swapping Options</span><span class="t" style="left:713.5px;top:675.5px;font-size:10px;color:#f0f0f0;font-weight:700;letter-spacing:-0.15px">Schematic Reference Information</span><div class="a" style="left:697px;top:695px;width:334px;height:17px;overflow:hidden"><span class="t" style="left:7.5px;top:6.5px;font-size:10px;color:#c8c8c8">2 objects are selected</span></div>
<div class="a" style="left:359.5px;top:28.5px;width:359.5px;height:24.0px;background:#393939;border-radius:3px"></div><svg class="a" style="left:0;top:0" width="1080" height="60"><path d="M438.5 48.5v4h-4z" fill="#f0f0f0"/><path d="M463.8 48.5v4h-4z" fill="#f0f0f0"/><path d="M488.5 48.5v4h-4z" fill="#f0f0f0"/><path d="M514.8 48.5v4h-4z" fill="#f0f0f0"/><path d="M539.5 48.5v4h-4z" fill="#f0f0f0"/><path d="M565.8 48.5v4h-4z" fill="#f0f0f0"/><path d="M590.5 48.5v4h-4z" fill="#f0f0f0"/><path d="M615.1 48.5v4h-4z" fill="#f0f0f0"/><path d="M641.5 48.5v4h-4z" fill="#f0f0f0"/><path d="M666.1 48.5v4h-4z" fill="#f0f0f0"/><path d="M692.5 48.5v4h-4z" fill="#f0f0f0"/><path d="M717.1 48.5v4h-4z" fill="#f0f0f0"/><g transform="translate(374.6,40)"><path d="M-6 -5h12l-4 5v5h-4v-5z" fill="#b6e6da"/></g><g transform="translate(399.3,40)"><path d="M0 -4h3a4 4 0 0 1 0 8h-3" stroke="#8aa0d8" stroke-width="2.6" fill="none"/><path d="M3 4h-3" stroke="#e8a0b0" stroke-width="2.6"/><path d="M6.5 1a4 4 0 0 1 -3.5 3" stroke="#e8a0b0" stroke-width="2.6" fill="none"/><circle cx="-5" cy="-4.5" r="1.3" fill="#cfe4f0"/><circle cx="-5" cy="0" r="1.3" fill="#cfe4f0"/><circle cx="-5" cy="4.5" r="1.3" fill="#cfe4f0"/></g><g transform="translate(425.0,40)"><path d="M-6 0h12M0 -6v12" stroke="#7e90c0" stroke-width="1.4"/></g><g transform="translate(450.3,40)"><rect x="-6" y="-6" width="12" height="12" stroke="#8a92c8" stroke-width="1.3" stroke-dasharray="1.5 1.2" fill="none"/></g><g transform="translate(475.0,40)"><rect x="-6" y="-3" width="3" height="6" fill="#e8a0b8"/><rect x="-1.5" y="-6" width="3" height="9" fill="#a8d8e8"/><rect x="3" y="-3" width="3" height="6" fill="#e8a0b8"/><rect x="-7" y="4" width="14" height="1.6" fill="#8aa0d8"/></g><g transform="translate(501.3,40)"><rect x="-5.5" y="-5.5" width="11" height="11" fill="#d8e4e8"/><path d="M-4 -7.5v2M-1.3 -7.5v2M1.3 -7.5v2M4 -7.5v2M-4 5.5v2M-1.3 5.5v2M1.3 5.5v2M4 5.5v2M-7.5 -4h2M-7.5 -1.3h2M-7.5 1.3h2M-7.5 4h2M5.5 -4h2M5.5 -1.3h2M5.5 1.3h2M5.5 4h2" stroke="#c8d4d8" stroke-width="1"/></g><g transform="translate(526.0,40)"><path d="M-5 -1v-5h4" stroke="#e8c040" stroke-width="1.3" fill="none"/><path d="M-4 4l8 -8" stroke="#7a8ad0" stroke-width="1.4"/><circle cx="-5" cy="5" r="2.2" stroke="#e0a030" stroke-width="1.3" fill="none"/><circle cx="5" cy="-5" r="2.2" stroke="#e0a030" stroke-width="1.3" fill="none"/></g><g transform="translate(552.3,40)"><path d="M-5 3v-5a2 2 0 0 1 4 0v2a2 2 0 0 0 4 0v-2a2 2 0 0 1 4 0v5" stroke="#8a9ae0" stroke-width="1.5" fill="none"/><circle cx="-6" cy="4" r="1.6" stroke="#d8a040" stroke-width="1.2" fill="none"/><circle cx="6" cy="4" r="1.6" stroke="#d8a040" stroke-width="1.2" fill="none"/></g><g transform="translate(577.0,40)"><circle cx="-1" cy="-2" r="5" fill="#f0d020"/><circle cx="-1" cy="-2" r="1.8" fill="#8a6a10"/><path d="M3 -2h4l-2 2z" fill="#f0d020"/><rect x="-2" y="3" width="2" height="5" fill="#f0e0a0"/></g><g transform="translate(601.6,40)"><path d="M-7 5v-5h5v-4h8v9z" fill="#c0e0f0"/></g><g transform="translate(628.0,40)"><rect x="-6.5" y="-6.5" width="13" height="13" stroke="#d890c0" stroke-width="1.3" fill="#3a2a3a"/><path d="M-3 3l6 -6" stroke="#c09830" stroke-width="2"/><circle cx="-3" cy="3" r="1.6" fill="#c09830"/><circle cx="3" cy="-3" r="1.6" fill="#c09830"/></g><g transform="translate(652.6,40)"><path d="M-6 -4v10h12v-10" stroke="#8a9ad0" stroke-width="1.3" fill="none"/><path d="M-2.5 3v-4M0 3v-4M2.5 3v-4" stroke="#a0b0d8" stroke-width="1"/><circle cx="-6" cy="-5" r="1.3" fill="none" stroke="#d8c080" stroke-width="1"/><circle cx="6" cy="-5" r="1.3" fill="none" stroke="#d8c080" stroke-width="1"/></g></svg><span class="t" style="left:672px;top:31.5px;font-family:'Liberation Serif',serif;font-size:17px;font-weight:700;color:#8aaee8">A</span><svg class="a" style="left:696px;top:33px" width="16" height="16"><path d="M1.5 13.5l12 -11" stroke="#7a98e0" stroke-width="1.8"/></svg>
<div class="a" style="left:0px;top:742.5px;width:1080px;height:22.5px;background:#2d2d2d;"></div><div class="a" style="left:5.5px;top:745.5px;width:23.0px;height:12.0px;background:#d0a000;"></div><div class="a" style="left:28.5px;top:745.5px;width:17.5px;height:12.0px;background:#545454;border-radius:0 2px 2px 0"></div><span class="t" style="left:31.5px;top:747.5px;font-size:10.5px;font-weight:400;color:#f0f0f0">LS</span><div class="a" style="left:50.5px;top:745.5px;width:15.0px;height:12.0px;background:#464646;border-radius:2px 0 0 2px"></div><div class="a" style="left:66.5px;top:745.5px;width:14.0px;height:12.0px;background:#4a4a4a;border-radius:0 2px 2px 0"></div><svg class="a" style="left:50px;top:745px" width="32" height="13"><path d="M9 3v6.5l-3 -3.25z" fill="#707070"/><path d="M71.5 3v6.5l3 -3.25z" transform="translate(-49,0)" fill="#ffffff"/></svg><div class="a" style="left:273.5px;top:743px;width:106.5px;height:19px;background:#3c3c3c;border-radius:3px"></div><div class="a" style="left:90.5px;top:745.5px;width:9.5px;height:10.0px;background:#ff0000;border:1px solid #d8c8c8"></div><span class="t" style="left:107.5px;top:748.0px;font-size:10px;color:#d4d4d4;font-weight:400;letter-spacing:-0.05px">[1] Top Layer</span><div class="a" style="left:176px;top:745.5px;width:9.5px;height:10.0px;background:#80d0f0;border:1px solid #d8c8c8"></div><span class="t" style="left:193px;top:748.0px;font-size:10px;color:#d4d4d4;font-weight:400;letter-spacing:-0.05px">[2] Signal Layer 2</span><div class="a" style="left:279px;top:745.5px;width:9.5px;height:10.0px;background:#c8a010;border:1px solid #d8c8c8"></div><span class="t" style="left:296px;top:748.0px;font-size:10px;color:#ffffff;font-weight:700;letter-spacing:-0.25px">[3] Signal Layer 1</span><div class="a" style="left:386px;top:745.5px;width:9.5px;height:10.0px;background:#0000ff;border:1px solid #d8c8c8"></div><span class="t" style="left:403px;top:748.0px;font-size:10px;color:#d4d4d4;font-weight:400;letter-spacing:-0.05px">[4] Bottom Layer</span><div class="a" style="left:485.5px;top:745.5px;width:9.5px;height:10.0px;background:#ff00ff;border:1px solid #d8c8c8"></div><span class="t" style="left:502.5px;top:748.0px;font-size:10px;color:#d4d4d4;font-weight:400;letter-spacing:-0.05px">Mechanical 1</span><div class="a" style="left:573px;top:745.5px;width:9.5px;height:10.0px;background:#a000a0;border:1px solid #d8c8c8"></div><span class="t" style="left:590px;top:748.0px;font-size:10px;color:#d4d4d4;font-weight:400;letter-spacing:-0.05px">Fab notes</span><div class="a" style="left:646px;top:745.5px;width:9.5px;height:10.0px;background:#00a000;border:1px solid #d8c8c8"></div><span class="t" style="left:663px;top:748.0px;font-size:10px;color:#d4d4d4;font-weight:400;letter-spacing:-0.05px">Private notes</span><div class="a" style="left:732.5px;top:745.5px;width:9.5px;height:10.0px;background:#a0a000;border:1px solid #d8c8c8"></div><span class="t" style="left:749.5px;top:748.0px;font-size:10px;color:#d4d4d4;font-weight:400;letter-spacing:-0.05px">Top Courtyard</span><div class="a" style="left:826px;top:745.5px;width:9.5px;height:10.0px;background:#ff00ff;border:1px solid #d8c8c8"></div><span class="t" style="left:843px;top:748.0px;font-size:10px;color:#d4d4d4;font-weight:400;letter-spacing:-0.05px">Board</span><div class="a" style="left:880px;top:745.5px;width:9.5px;height:10.0px;background:#800080;border:1px solid #d8c8c8"></div><span class="t" style="left:897px;top:748.0px;font-size:10px;color:#d4d4d4;font-weight:400;letter-spacing:-0.05px">Top Assembly</span><div class="a" style="left:970px;top:745.5px;width:9.5px;height:10.0px;background:#ff00ff;border:1px solid #d8c8c8"></div><span class="t" style="left:987px;top:748.0px;font-size:10px;color:#d4d4d4;font-weight:400;letter-spacing:-0.05px">Mechanical 13</span><div class="a" style="left:1064px;top:745.5px;width:9.5px;height:10.0px;background:#800080;border:1px solid #d8c8c8"></div>
</body></html>
